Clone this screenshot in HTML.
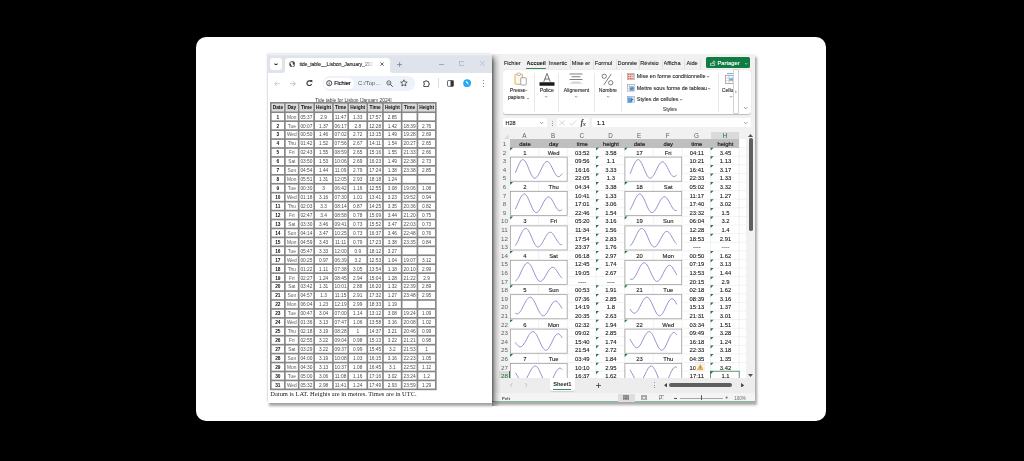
<!DOCTYPE html>
<html><head><meta charset="utf-8"><title>tide</title>
<style>
html,body{margin:0;padding:0;}
body{width:1024px;height:461px;background:#000;overflow:hidden;position:relative;
 font-family:"Liberation Sans",sans-serif;}
.abs{position:absolute;}
.card{position:absolute;left:196px;top:37px;width:630px;height:384px;background:#fff;border-radius:10px;}


.br{position:absolute;left:268px;top:54px;width:223.6px;height:348.7px;background:#fff;
 box-shadow:-1px -.6px 1.6px rgba(0,0,0,.13), .6px 3.2px 2.4px rgba(0,0,0,.36);}
.blur{filter:blur(0.35px);}


.xl{position:absolute;left:491.6px;top:54px;width:263.2px;height:348.2px;background:#f1f1f1;
 box-shadow:2.4px 3px 2.4px rgba(0,0,0,.34);overflow:hidden;}


/* ---------- browser ---------- */
.tabstrip{position:absolute;left:0;top:0;width:100%;height:18.5px;background:#dfe3eb;}
.tabstrip:before{content:"";position:absolute;left:0;top:0;width:100%;height:2px;background:linear-gradient(#f2f4f7,#dfe3eb);}
.tsbtn{position:absolute;left:2.2px;top:3.9px;width:12px;height:12px;background:#fff;border-radius:3px;}
.tab{position:absolute;left:17.4px;top:3.9px;width:104.5px;height:14.7px;background:#fff;border-radius:3.5px 3.5px 0 0;}
.tabtitle{position:absolute;left:14px;top:3.2px;font-size:5.3px;color:#222;-webkit-text-stroke:.1px #222;white-space:nowrap;width:74.5px;overflow:hidden;
 -webkit-mask-image:linear-gradient(90deg,#000 82%,transparent);letter-spacing:-0.137px}
.toolbar{position:absolute;left:0;top:18.5px;width:100%;height:21px;background:#fff;border-bottom:1px solid #e6e6e6;}
.omni{position:absolute;left:54.5px;top:3.6px;width:92px;height:14.8px;border-radius:7.4px;background:#edf1f9;}
.chip{position:absolute;left:1.3px;top:1.6px;width:30px;height:11.6px;border-radius:5.8px;background:#fff;}
.content{position:absolute;left:0;top:39.5px;width:100%;bottom:0;background:#fff;overflow:hidden;}
.cap{position:absolute;left:2.1px;width:166.7px;top:4.2px;text-align:center;font-size:4.8px;color:#333;white-space:nowrap;}
.foot{position:absolute;left:2.3px;top:296.2px;font-family:"Liberation Serif",serif;font-size:6.48px;color:#1a1a1a;white-space:nowrap;}
.tc{position:absolute;text-align:center;font-size:4.8px;color:#4a4a4a;white-space:nowrap;}
.tc.th{font-weight:bold;color:#111;}
.tc.td0{font-weight:bold;color:#111;}
.tc.td1{color:#5c5754;}
table.tt{position:absolute;left:1.9px;top:48.2px;border-collapse:collapse;table-layout:fixed;font-size:5.3px;color:#333;}
table.tt td,table.tt th{border:1.25px solid #7b7b7b;padding:0;height:7.7px;line-height:7.7px;text-align:center;overflow:hidden;white-space:nowrap;
 box-shadow:inset 0 0 0 0.45px #fff, inset 0 0 0 0.9px #bdbdbd;}
table.tt th{background:#d3d3d3;color:#111;font-weight:bold;box-shadow:inset 0 0 0 0.45px #f4f4f4, inset 0 0 0 0.9px #b0b0b0;}
table.tt td.d{font-weight:bold;color:#111;}


/* ---------- excel ---------- */
.xtabs{position:absolute;left:0;top:0;width:100%;height:16px;font-size:5.6px;color:#222;-webkit-text-stroke:.1px #222;}
.xtabs span{position:absolute;top:5.6px;white-space:nowrap;overflow:hidden;height:8px;}
.xsep{position:absolute;top:4.5px;width:0.5px;height:10px;background:#e0e0e0;}
.share{position:absolute;left:214.8px;top:3.4px;width:43.6px;height:10.6px;background:#117c41;border-radius:1.6px;color:#fff;font-size:6px;}
.ribbon{position:absolute;left:11.2px;top:15.8px;width:248.4px;height:44.2px;background:#fff;border-radius:3px;box-shadow:0 0.4px 1px rgba(0,0,0,.22);}
.rsep{position:absolute;top:3px;width:0.5px;height:39px;background:#e9e9e9;}
.rlab{position:absolute;font-size:5.1px;color:#2a2a2a;-webkit-text-stroke:.1px #2a2a2a;text-align:center;white-space:nowrap;line-height:7px;}
.chev{position:absolute;width:2.2px;height:2.2px;border-right:0.6px solid #555;border-bottom:0.6px solid #555;transform:rotate(45deg);}
.fbox{position:absolute;top:64.4px;height:9px;background:#fff;border-radius:1.6px;}
.colhdr{position:absolute;top:77.8px;height:7.5px;font-size:6.3px;color:#5e5e5e;text-align:center;line-height:8px;}
.rowhdr{position:absolute;left:7.4px;width:11px;font-size:6.2px;color:#5e5e5e;text-align:center;}
.grid{position:absolute;left:18.55px;top:85.05px;width:236px;height:239.5px;background:#fff;overflow:hidden;}
.cell{position:absolute;margin-left:.5px;font-size:5.85px;color:#1c1c1c;text-align:center;white-space:nowrap;-webkit-text-stroke:.11px #1c1c1c;}
.gt{position:absolute;width:0;height:0;border-top:3px solid #1f6f3c;border-right:3px solid transparent;}
.chart{position:absolute;background:#fff;border:0.6px solid #9c9c9c;box-sizing:border-box;}
</style></head><body>

<div class="card"></div>
<div class="blur"><div class="xl">
<div class="xtabs">
<span style="left:12.3px;width:20.0px;">Fichier</span>
<span style="left:35.0px;width:20.5px;font-weight:bold;color:#1b1b1b;font-size:5.4px;">Accueil</span>
<span style="left:57.4px;width:20.6px;">Insertic</span>
<span style="left:80.2px;width:20.4px;">Mise er</span>
<span style="left:103.2px;width:20.3px;">Formul</span>
<span style="left:126.0px;width:20.4px;">Donnée</span>
<span style="left:148.7px;width:20.6px;">Révisio</span>
<span style="left:172.0px;width:20.2px;">Afficha</span>
<span style="left:194.9px;width:13.0px;">Aide</span>
<div class="xsep" style="left:56.0px"></div>
<div class="xsep" style="left:78.9px"></div>
<div class="xsep" style="left:101.6px"></div>
<div class="xsep" style="left:124.4px"></div>
<div class="xsep" style="left:147.2px"></div>
<div class="xsep" style="left:170.0px"></div>
<div class="xsep" style="left:192.8px"></div>
<div class="xsep" style="left:208.9px"></div>
<div class="abs" style="left:34.8px;top:13.6px;width:19.2px;height:1.3px;background:#2f8553;border-radius:.6px"></div>
</div>
<div class="share"><svg class="abs" style="left:3.7px;top:2.4px" width="5.6" height="6.2" viewBox="0 0 12 13"><path d="M1 6v6h9V8" fill="none" stroke="#fff" stroke-width="1.3"/><path d="M3.5 8.5C4 5.5 6 4 8 4V1.5L11.5 5 8 8.2V6C6 6 4.5 7 3.5 8.5z" fill="none" stroke="#fff" stroke-width="1.2"/></svg><span class="abs" style="left:11px;top:2.5px;font-size:5.8px;-webkit-text-stroke:.12px #fff">Partager</span><svg class="abs" style="left:38.60px;top:5.25px;overflow:visible" width="2.40" height="1.30"><path d="M0 0L1.20 1.30L2.40 0" fill="none" stroke="#e8f3ec" stroke-width="0.55"/></svg></div>
<div class="ribbon">
<div class="rsep" style="left:31.4px"></div>
<div class="rsep" style="left:55.6px"></div>
<div class="rsep" style="left:91.4px"></div>
<div class="rsep" style="left:118.5px"></div>
<div class="rsep" style="left:215.5px"></div>
<svg class="abs" style="left:11px;top:2.6px" width="14" height="14.5" viewBox="0 0 28 29"><rect x="2" y="4.5" width="15" height="20" rx="1" fill="#fdf6ea" stroke="#e3a94d" stroke-width="1.8"/><rect x="6" y="2" width="7" height="5" rx="1.3" fill="#f4f4f4" stroke="#9a9a9a" stroke-width="1.1"/><rect x="13.5" y="11.5" width="11" height="14.5" rx="1" fill="#fff" stroke="#8c8c8c" stroke-width="1.5"/></svg>
<div class="rlab" style="left:1.8px;width:28px;top:17.5px">Presse-</div>
<div class="rlab" style="left:-0.5px;width:28px;top:24.5px">papiers</div>
<svg class="abs" style="left:24.60px;top:27.75px;overflow:visible" width="2.00" height="1.10"><path d="M0 0L1.00 1.10L2.00 0" fill="none" stroke="#555" stroke-width="0.55"/></svg>
<svg class="abs" style="left:36px;top:2.4px" width="16" height="15" viewBox="0 0 32 30"><path d="M9.5 19.5L16 3l6.5 16.5M11.6 14h8.8" fill="none" stroke="#444" stroke-width="1.5"/><rect x="1" y="20.5" width="30" height="7" fill="#1c1c1c"/></svg>
<div class="rlab" style="left:32px;width:24px;top:17.5px">Police</div>
<svg class="abs" style="left:42.40px;top:26.65px;overflow:visible" width="2.40" height="1.30"><path d="M0 0L1.20 1.30L2.40 0" fill="none" stroke="#555" stroke-width="0.55"/></svg>
<svg class="abs" style="left:66.6px;top:3.6px" width="14" height="11" viewBox="0 0 28 22"><path d="M1 2h26M5 7.5h18M1 13h26" stroke="#555" stroke-width="1.5"/><path d="M5 18.5h18" stroke="#aaa" stroke-width="1.5"/><path d="M1 21h26" stroke="#ccc" stroke-width="1.2"/></svg>
<div class="rlab" style="left:56px;width:35.4px;top:17.5px">Alignement</div>
<svg class="abs" style="left:72.30px;top:26.65px;overflow:visible" width="2.40" height="1.30"><path d="M0 0L1.20 1.30L2.40 0" fill="none" stroke="#555" stroke-width="0.55"/></svg>
<svg class="abs" style="left:98.5px;top:3px" width="13" height="13" viewBox="0 0 26 26"><circle cx="6.5" cy="6.5" r="4.3" fill="none" stroke="#555" stroke-width="1.5"/><circle cx="19.5" cy="19.5" r="4.3" fill="none" stroke="#555" stroke-width="1.5"/><path d="M20.5 2L5.5 24" stroke="#555" stroke-width="1.5"/></svg>
<div class="rlab" style="left:91.6px;width:27px;top:17.5px">Nombre</div>
<svg class="abs" style="left:103.80px;top:26.65px;overflow:visible" width="2.40" height="1.30"><path d="M0 0L1.20 1.30L2.40 0" fill="none" stroke="#555" stroke-width="0.55"/></svg>
<svg class="abs" style="left:124.4px;top:3.2px" width="7.6" height="7.4" viewBox="0 0 15 15"><rect x=".6" y=".6" width="13.8" height="13.8" fill="#fff" stroke="#8a8a8a" stroke-width="1"/><rect x="1.5" y="1.6" width="12" height="3.4" fill="#e0705f"/><rect x="1.5" y="6" width="7" height="3.2" fill="#e0705f"/><rect x="9" y="6" width="4.5" height="3.2" fill="#7fb2e5"/><rect x="1.5" y="10.2" width="12" height="3.2" fill="#e0705f"/><path d="M5 1v13M10 1v13" stroke="#fff" stroke-width=".8"/></svg>
<div class="rlab" style="left:134px;top:3.3px;text-align:left;font-size:5.4px">Mise en forme conditionnelle</div>
<svg class="abs" style="left:204.20px;top:6.35px;overflow:visible" width="2.20" height="1.30"><path d="M0 0L1.10 1.30L2.20 0" fill="none" stroke="#444" stroke-width="0.60"/></svg>
<svg class="abs" style="left:124.4px;top:14.7px" width="7.6" height="7.4" viewBox="0 0 15 15"><rect x=".6" y=".6" width="13.8" height="13.8" fill="#fff" stroke="#8a8a8a" stroke-width="1"/><path d="M1 5h13M1 9.5h13M5 1v13M10 1v13" stroke="#9a9a9a" stroke-width=".9"/><rect x="5.5" y="5.5" width="8.5" height="8.5" fill="#5aa2e6" opacity=".85"/><path d="M5 13l5-6 3 1z" fill="#2c6fb7"/></svg>
<div class="rlab" style="left:134px;top:14.8px;text-align:left;font-size:5.4px">Mettre sous forme de tableau</div>
<svg class="abs" style="left:205.70px;top:17.85px;overflow:visible" width="2.20" height="1.30"><path d="M0 0L1.10 1.30L2.20 0" fill="none" stroke="#444" stroke-width="0.60"/></svg>
<svg class="abs" style="left:124.4px;top:26.3px" width="7.6" height="7.4" viewBox="0 0 15 15"><rect x=".6" y=".6" width="13.8" height="13.8" fill="#dfe9f5" stroke="#8a8a8a" stroke-width="1"/><rect x="1.5" y="3" width="9" height="10.5" fill="#5aa2e6"/><path d="M4 13l6-8 3 1.5z" fill="#2c6fb7"/></svg>
<div class="rlab" style="left:134px;top:26.4px;text-align:left;font-size:5.4px">Styles de cellules</div>
<svg class="abs" style="left:177.20px;top:29.45px;overflow:visible" width="2.20" height="1.30"><path d="M0 0L1.10 1.30L2.20 0" fill="none" stroke="#444" stroke-width="0.60"/></svg>
<div class="rlab" style="left:150px;width:34px;top:36.6px;font-size:5.2px;color:#555">Styles</div>
<svg class="abs" style="left:222.4px;top:3.2px" width="12" height="11.5" viewBox="0 0 24 23"><path d="M4 1.2h12" stroke="#4a90d9" stroke-width="1.6"/><rect x="1" y="5" width="22" height="16" fill="#fff" stroke="#9a8f86" stroke-width="1.4"/><path d="M1 10.3h22M1 15.6h22M8 5v16M16 5v16" stroke="#a8a8a8" stroke-width="1"/><rect x="8.5" y="10.8" width="14" height="4.4" fill="#56b0f2"/></svg>
<div class="rlab" style="left:219px;width:20px;top:17.5px;text-align:left">Cellu</div>
<svg class="abs" style="left:227.40px;top:26.55px;overflow:visible" width="2.40" height="1.30"><path d="M0 0L1.20 1.30L2.40 0" fill="none" stroke="#555" stroke-width="0.55"/></svg>
<div class="abs" style="left:230.2px;top:-0.6px;width:6.1px;height:44.4px;background:#fff;border:0.5px solid #d2d2d2;border-radius:1px;box-sizing:border-box"></div>
<div class="abs" style="left:232.2px;top:18px;font-size:5px;color:#444;line-height:6px">›</div>
<svg class="abs" style="left:240.80px;top:36.90px;overflow:visible" width="3.40" height="1.80"><path d="M0 0L1.70 1.80L3.40 0" fill="none" stroke="#555" stroke-width="0.55"/></svg>
</div>
<div class="fbox" style="left:11.4px;width:44px"><span class="abs" style="left:2.6px;top:1.6px;font-size:5.5px;color:#222;-webkit-text-stroke:.12px #222">H28</span><svg class="abs" style="left:36.80px;top:3.75px;overflow:visible" width="3.20" height="1.70"><path d="M0 0L1.60 1.70L3.20 0" fill="none" stroke="#555" stroke-width="0.55"/></svg></div>
<div class="abs" style="left:60.1px;top:66.6px;width:.9px;height:.9px;background:#666;border-radius:50%"></div>
<div class="abs" style="left:60.1px;top:68.8px;width:.9px;height:.9px;background:#666;border-radius:50%"></div>
<div class="abs" style="left:60.1px;top:71.0px;width:.9px;height:.9px;background:#666;border-radius:50%"></div>
<div class="fbox" style="left:65.4px;width:32px"><svg class="abs" style="left:2.3px;top:1.8px" width="18" height="5.6" viewBox="0 0 18 5.6"><path d="M.3.3l5.400 5M5.700.3l-5.400 5" stroke="#c2c2c2" stroke-width=".65" fill="none"/><path d="M10.400 3l2.300 2.300L17.300.4" stroke="#c2c2c2" stroke-width=".65" fill="none"/></svg><span class="abs" style="left:23.6px;top:-0.2px;font-family:'Liberation Serif',serif;font-style:italic;font-weight:bold;font-size:8.2px;color:#444;letter-spacing:-.5px">f<span style="font-size:6.2px;position:relative;top:.4px">x</span></span></div>
<div class="fbox" style="left:100.4px;width:159px"><span class="abs" style="left:5px;top:1.5px;font-size:5.6px;color:#111;-webkit-text-stroke:.15px #111">1.1</span><svg class="abs" style="left:152.30px;top:3.70px;overflow:visible" width="3.40" height="1.80"><path d="M0 0L1.70 1.80L3.40 0" fill="none" stroke="#555" stroke-width="0.55"/></svg></div>
<svg class="abs" style="left:12.4px;top:79.6px" width="5" height="5" viewBox="0 0 5 5"><path d="M5 0v5H0z" fill="#dddddd"/></svg>
<div class="colhdr" style="left:18.55px;width:28.65px;">A</div>
<div class="colhdr" style="left:47.20px;width:28.65px;">B</div>
<div class="colhdr" style="left:75.85px;width:28.65px;">C</div>
<div class="colhdr" style="left:104.50px;width:28.65px;">D</div>
<div class="colhdr" style="left:133.15px;width:28.65px;">E</div>
<div class="colhdr" style="left:161.80px;width:28.65px;">F</div>
<div class="colhdr" style="left:190.45px;width:28.65px;">G</div>
<div class="colhdr" style="left:219.10px;width:28.65px;background:#dadada;color:#1e6b3c;border-bottom:0.7px solid #2f7d4f;height:6.9px;">H</div>
<div class="rowhdr" style="top:85.05px;height:8.60px;line-height:10.20px;">1</div>
<div class="rowhdr" style="top:93.65px;height:8.60px;line-height:10.20px;">2</div>
<div class="rowhdr" style="top:102.25px;height:8.60px;line-height:10.20px;">3</div>
<div class="rowhdr" style="top:110.85px;height:8.60px;line-height:10.20px;">4</div>
<div class="rowhdr" style="top:119.45px;height:8.60px;line-height:10.20px;">5</div>
<div class="rowhdr" style="top:128.05px;height:8.60px;line-height:10.20px;">6</div>
<div class="rowhdr" style="top:136.65px;height:8.60px;line-height:10.20px;">7</div>
<div class="rowhdr" style="top:145.25px;height:8.60px;line-height:10.20px;">8</div>
<div class="rowhdr" style="top:153.85px;height:8.60px;line-height:10.20px;">9</div>
<div class="rowhdr" style="top:162.45px;height:8.60px;line-height:10.20px;">10</div>
<div class="rowhdr" style="top:171.05px;height:8.60px;line-height:10.20px;">11</div>
<div class="rowhdr" style="top:179.65px;height:8.60px;line-height:10.20px;">12</div>
<div class="rowhdr" style="top:188.25px;height:8.60px;line-height:10.20px;">13</div>
<div class="rowhdr" style="top:196.85px;height:8.60px;line-height:10.20px;">14</div>
<div class="rowhdr" style="top:205.45px;height:8.60px;line-height:10.20px;">15</div>
<div class="rowhdr" style="top:214.05px;height:8.60px;line-height:10.20px;">16</div>
<div class="rowhdr" style="top:222.65px;height:8.60px;line-height:10.20px;">17</div>
<div class="rowhdr" style="top:231.25px;height:8.60px;line-height:10.20px;">18</div>
<div class="rowhdr" style="top:239.85px;height:8.60px;line-height:10.20px;">19</div>
<div class="rowhdr" style="top:248.45px;height:8.60px;line-height:10.20px;">20</div>
<div class="rowhdr" style="top:257.05px;height:8.60px;line-height:10.20px;">21</div>
<div class="rowhdr" style="top:265.65px;height:8.60px;line-height:10.20px;">22</div>
<div class="rowhdr" style="top:274.25px;height:8.60px;line-height:10.20px;">23</div>
<div class="rowhdr" style="top:282.85px;height:8.60px;line-height:10.20px;">24</div>
<div class="rowhdr" style="top:291.45px;height:8.60px;line-height:10.20px;">25</div>
<div class="rowhdr" style="top:300.05px;height:8.60px;line-height:10.20px;">26</div>
<div class="rowhdr" style="top:308.65px;height:8.60px;line-height:10.20px;">27</div>
<div class="rowhdr" style="top:317.25px;height:8.60px;line-height:10.20px;color:#1e6b3c;background:#dcdcdc;">28</div>
<div class="abs" style="left:17.85px;top:317.25px;width:.7px;height:8.60px;background:#2f7d4f"></div>
<div class="grid">
<svg class="abs" style="left:0;top:0" width="236.2" height="239.3">
<path d="M0 8.60H236.2" stroke="#e4e4e4" stroke-width=".5"/>
<path d="M0 17.20H236.2" stroke="#e4e4e4" stroke-width=".5"/>
<path d="M0 25.80H236.2" stroke="#e4e4e4" stroke-width=".5"/>
<path d="M0 34.40H236.2" stroke="#e4e4e4" stroke-width=".5"/>
<path d="M0 43.00H236.2" stroke="#e4e4e4" stroke-width=".5"/>
<path d="M0 51.60H236.2" stroke="#e4e4e4" stroke-width=".5"/>
<path d="M0 60.20H236.2" stroke="#e4e4e4" stroke-width=".5"/>
<path d="M0 68.80H236.2" stroke="#e4e4e4" stroke-width=".5"/>
<path d="M0 77.40H236.2" stroke="#e4e4e4" stroke-width=".5"/>
<path d="M0 86.00H236.2" stroke="#e4e4e4" stroke-width=".5"/>
<path d="M0 94.60H236.2" stroke="#e4e4e4" stroke-width=".5"/>
<path d="M0 103.20H236.2" stroke="#e4e4e4" stroke-width=".5"/>
<path d="M0 111.80H236.2" stroke="#e4e4e4" stroke-width=".5"/>
<path d="M0 120.40H236.2" stroke="#e4e4e4" stroke-width=".5"/>
<path d="M0 129.00H236.2" stroke="#e4e4e4" stroke-width=".5"/>
<path d="M0 137.60H236.2" stroke="#e4e4e4" stroke-width=".5"/>
<path d="M0 146.20H236.2" stroke="#e4e4e4" stroke-width=".5"/>
<path d="M0 154.80H236.2" stroke="#e4e4e4" stroke-width=".5"/>
<path d="M0 163.40H236.2" stroke="#e4e4e4" stroke-width=".5"/>
<path d="M0 172.00H236.2" stroke="#e4e4e4" stroke-width=".5"/>
<path d="M0 180.60H236.2" stroke="#e4e4e4" stroke-width=".5"/>
<path d="M0 189.20H236.2" stroke="#e4e4e4" stroke-width=".5"/>
<path d="M0 197.80H236.2" stroke="#e4e4e4" stroke-width=".5"/>
<path d="M0 206.40H236.2" stroke="#e4e4e4" stroke-width=".5"/>
<path d="M0 215.00H236.2" stroke="#e4e4e4" stroke-width=".5"/>
<path d="M0 223.60H236.2" stroke="#e4e4e4" stroke-width=".5"/>
<path d="M0 232.20H236.2" stroke="#e4e4e4" stroke-width=".5"/>
<path d="M0 240.80H236.2" stroke="#e4e4e4" stroke-width=".5"/>
<path d="M28.65 0V239.3" stroke="#e4e4e4" stroke-width=".5"/>
<path d="M57.30 0V239.3" stroke="#e4e4e4" stroke-width=".5"/>
<path d="M85.95 0V239.3" stroke="#e4e4e4" stroke-width=".5"/>
<path d="M114.60 0V239.3" stroke="#e4e4e4" stroke-width=".5"/>
<path d="M143.25 0V239.3" stroke="#e4e4e4" stroke-width=".5"/>
<path d="M171.90 0V239.3" stroke="#e4e4e4" stroke-width=".5"/>
<path d="M200.55 0V239.3" stroke="#e4e4e4" stroke-width=".5"/>
<path d="M229.20 0V239.3" stroke="#e4e4e4" stroke-width=".5"/>
</svg>
<div class="abs" style="left:0;top:0;width:229.20px;height:8.60px;background:#bfbfbf"></div>
<div class="cell" style="left:0.00px;top:0;width:28.65px;line-height:10.40px;color:#222;-webkit-text-stroke:.2px #2a2a2a">date</div>
<div class="cell" style="left:28.65px;top:0;width:28.65px;line-height:10.40px;color:#222;-webkit-text-stroke:.2px #2a2a2a">day</div>
<div class="cell" style="left:57.30px;top:0;width:28.65px;line-height:10.40px;color:#222;-webkit-text-stroke:.2px #2a2a2a">time</div>
<div class="cell" style="left:85.95px;top:0;width:28.65px;line-height:10.40px;color:#222;-webkit-text-stroke:.2px #2a2a2a">height</div>
<div class="cell" style="left:114.60px;top:0;width:28.65px;line-height:10.40px;color:#222;-webkit-text-stroke:.2px #2a2a2a">date</div>
<div class="cell" style="left:143.25px;top:0;width:28.65px;line-height:10.40px;color:#222;-webkit-text-stroke:.2px #2a2a2a">day</div>
<div class="cell" style="left:171.90px;top:0;width:28.65px;line-height:10.40px;color:#222;-webkit-text-stroke:.2px #2a2a2a">time</div>
<div class="cell" style="left:200.55px;top:0;width:28.65px;line-height:10.40px;color:#222;-webkit-text-stroke:.2px #2a2a2a">height</div>
<div class="cell" style="left:0.00px;top:8.60px;width:28.65px;line-height:10.40px">1</div>
<div class="cell" style="left:28.65px;top:8.60px;width:28.65px;line-height:10.40px">Wed</div>
<div class="cell" style="left:57.30px;top:8.60px;width:28.65px;line-height:10.40px">03:52</div>
<div class="cell" style="left:85.95px;top:8.60px;width:28.65px;line-height:10.40px">3.58</div>
<div class="cell" style="left:57.30px;top:17.20px;width:28.65px;line-height:10.40px">09:56</div>
<div class="cell" style="left:85.95px;top:17.20px;width:28.65px;line-height:10.40px">1.1</div>
<div class="cell" style="left:57.30px;top:25.80px;width:28.65px;line-height:10.40px">16:16</div>
<div class="cell" style="left:85.95px;top:25.80px;width:28.65px;line-height:10.40px">3.33</div>
<div class="cell" style="left:57.30px;top:34.40px;width:28.65px;line-height:10.40px">22:05</div>
<div class="cell" style="left:85.95px;top:34.40px;width:28.65px;line-height:10.40px">1.3</div>
<div class="cell" style="left:0.00px;top:43.00px;width:28.65px;line-height:10.40px">2</div>
<div class="cell" style="left:28.65px;top:43.00px;width:28.65px;line-height:10.40px">Thu</div>
<div class="cell" style="left:57.30px;top:43.00px;width:28.65px;line-height:10.40px">04:34</div>
<div class="cell" style="left:85.95px;top:43.00px;width:28.65px;line-height:10.40px">3.38</div>
<div class="cell" style="left:57.30px;top:51.60px;width:28.65px;line-height:10.40px">10:41</div>
<div class="cell" style="left:85.95px;top:51.60px;width:28.65px;line-height:10.40px">1.33</div>
<div class="cell" style="left:57.30px;top:60.20px;width:28.65px;line-height:10.40px">17:01</div>
<div class="cell" style="left:85.95px;top:60.20px;width:28.65px;line-height:10.40px">3.06</div>
<div class="cell" style="left:57.30px;top:68.80px;width:28.65px;line-height:10.40px">22:46</div>
<div class="cell" style="left:85.95px;top:68.80px;width:28.65px;line-height:10.40px">1.54</div>
<div class="cell" style="left:0.00px;top:77.40px;width:28.65px;line-height:10.40px">3</div>
<div class="cell" style="left:28.65px;top:77.40px;width:28.65px;line-height:10.40px">Fri</div>
<div class="cell" style="left:57.30px;top:77.40px;width:28.65px;line-height:10.40px">05:20</div>
<div class="cell" style="left:85.95px;top:77.40px;width:28.65px;line-height:10.40px">3.16</div>
<div class="cell" style="left:57.30px;top:86.00px;width:28.65px;line-height:10.40px">11:34</div>
<div class="cell" style="left:85.95px;top:86.00px;width:28.65px;line-height:10.40px">1.56</div>
<div class="cell" style="left:57.30px;top:94.60px;width:28.65px;line-height:10.40px">17:54</div>
<div class="cell" style="left:85.95px;top:94.60px;width:28.65px;line-height:10.40px">2.83</div>
<div class="cell" style="left:57.30px;top:103.20px;width:28.65px;line-height:10.40px">23:37</div>
<div class="cell" style="left:85.95px;top:103.20px;width:28.65px;line-height:10.40px">1.76</div>
<div class="cell" style="left:0.00px;top:111.80px;width:28.65px;line-height:10.40px">4</div>
<div class="cell" style="left:28.65px;top:111.80px;width:28.65px;line-height:10.40px">Sat</div>
<div class="cell" style="left:57.30px;top:111.80px;width:28.65px;line-height:10.40px">06:18</div>
<div class="cell" style="left:85.95px;top:111.80px;width:28.65px;line-height:10.40px">2.97</div>
<div class="cell" style="left:57.30px;top:120.40px;width:28.65px;line-height:10.40px">12:45</div>
<div class="cell" style="left:85.95px;top:120.40px;width:28.65px;line-height:10.40px">1.74</div>
<div class="cell" style="left:57.30px;top:129.00px;width:28.65px;line-height:10.40px">19:05</div>
<div class="cell" style="left:85.95px;top:129.00px;width:28.65px;line-height:10.40px">2.67</div>
<div class="cell" style="left:57.30px;top:137.60px;width:28.65px;line-height:10.40px">----</div>
<div class="cell" style="left:85.95px;top:137.60px;width:28.65px;line-height:10.40px">----</div>
<div class="cell" style="left:0.00px;top:146.20px;width:28.65px;line-height:10.40px">5</div>
<div class="cell" style="left:28.65px;top:146.20px;width:28.65px;line-height:10.40px">Sun</div>
<div class="cell" style="left:57.30px;top:146.20px;width:28.65px;line-height:10.40px">00:53</div>
<div class="cell" style="left:85.95px;top:146.20px;width:28.65px;line-height:10.40px">1.91</div>
<div class="cell" style="left:57.30px;top:154.80px;width:28.65px;line-height:10.40px">07:36</div>
<div class="cell" style="left:85.95px;top:154.80px;width:28.65px;line-height:10.40px">2.85</div>
<div class="cell" style="left:57.30px;top:163.40px;width:28.65px;line-height:10.40px">14:19</div>
<div class="cell" style="left:85.95px;top:163.40px;width:28.65px;line-height:10.40px">1.8</div>
<div class="cell" style="left:57.30px;top:172.00px;width:28.65px;line-height:10.40px">20:35</div>
<div class="cell" style="left:85.95px;top:172.00px;width:28.65px;line-height:10.40px">2.63</div>
<div class="cell" style="left:0.00px;top:180.60px;width:28.65px;line-height:10.40px">6</div>
<div class="cell" style="left:28.65px;top:180.60px;width:28.65px;line-height:10.40px">Mon</div>
<div class="cell" style="left:57.30px;top:180.60px;width:28.65px;line-height:10.40px">02:32</div>
<div class="cell" style="left:85.95px;top:180.60px;width:28.65px;line-height:10.40px">1.94</div>
<div class="cell" style="left:57.30px;top:189.20px;width:28.65px;line-height:10.40px">09:02</div>
<div class="cell" style="left:85.95px;top:189.20px;width:28.65px;line-height:10.40px">2.85</div>
<div class="cell" style="left:57.30px;top:197.80px;width:28.65px;line-height:10.40px">15:40</div>
<div class="cell" style="left:85.95px;top:197.80px;width:28.65px;line-height:10.40px">1.74</div>
<div class="cell" style="left:57.30px;top:206.40px;width:28.65px;line-height:10.40px">21:54</div>
<div class="cell" style="left:85.95px;top:206.40px;width:28.65px;line-height:10.40px">2.72</div>
<div class="cell" style="left:0.00px;top:215.00px;width:28.65px;line-height:10.40px">7</div>
<div class="cell" style="left:28.65px;top:215.00px;width:28.65px;line-height:10.40px">Tue</div>
<div class="cell" style="left:57.30px;top:215.00px;width:28.65px;line-height:10.40px">03:49</div>
<div class="cell" style="left:85.95px;top:215.00px;width:28.65px;line-height:10.40px">1.84</div>
<div class="cell" style="left:57.30px;top:223.60px;width:28.65px;line-height:10.40px">10:10</div>
<div class="cell" style="left:85.95px;top:223.60px;width:28.65px;line-height:10.40px">2.95</div>
<div class="cell" style="left:57.30px;top:232.20px;width:28.65px;line-height:10.40px">16:37</div>
<div class="cell" style="left:85.95px;top:232.20px;width:28.65px;line-height:10.40px">1.62</div>
<div class="cell" style="left:114.60px;top:8.60px;width:28.65px;line-height:10.40px">17</div>
<div class="cell" style="left:143.25px;top:8.60px;width:28.65px;line-height:10.40px">Fri</div>
<div class="cell" style="left:171.90px;top:8.60px;width:28.65px;line-height:10.40px">04:11</div>
<div class="cell" style="left:200.55px;top:8.60px;width:28.65px;line-height:10.40px">3.45</div>
<div class="cell" style="left:171.90px;top:17.20px;width:28.65px;line-height:10.40px">10:21</div>
<div class="cell" style="left:200.55px;top:17.20px;width:28.65px;line-height:10.40px">1.13</div>
<div class="cell" style="left:171.90px;top:25.80px;width:28.65px;line-height:10.40px">16:41</div>
<div class="cell" style="left:200.55px;top:25.80px;width:28.65px;line-height:10.40px">3.17</div>
<div class="cell" style="left:171.90px;top:34.40px;width:28.65px;line-height:10.40px">22:33</div>
<div class="cell" style="left:200.55px;top:34.40px;width:28.65px;line-height:10.40px">1.33</div>
<div class="cell" style="left:114.60px;top:43.00px;width:28.65px;line-height:10.40px">18</div>
<div class="cell" style="left:143.25px;top:43.00px;width:28.65px;line-height:10.40px">Sat</div>
<div class="cell" style="left:171.90px;top:43.00px;width:28.65px;line-height:10.40px">05:02</div>
<div class="cell" style="left:200.55px;top:43.00px;width:28.65px;line-height:10.40px">3.32</div>
<div class="cell" style="left:171.90px;top:51.60px;width:28.65px;line-height:10.40px">11:17</div>
<div class="cell" style="left:200.55px;top:51.60px;width:28.65px;line-height:10.40px">1.27</div>
<div class="cell" style="left:171.90px;top:60.20px;width:28.65px;line-height:10.40px">17:40</div>
<div class="cell" style="left:200.55px;top:60.20px;width:28.65px;line-height:10.40px">3.02</div>
<div class="cell" style="left:171.90px;top:68.80px;width:28.65px;line-height:10.40px">23:32</div>
<div class="cell" style="left:200.55px;top:68.80px;width:28.65px;line-height:10.40px">1.5</div>
<div class="cell" style="left:114.60px;top:77.40px;width:28.65px;line-height:10.40px">19</div>
<div class="cell" style="left:143.25px;top:77.40px;width:28.65px;line-height:10.40px">Sun</div>
<div class="cell" style="left:171.90px;top:77.40px;width:28.65px;line-height:10.40px">06:04</div>
<div class="cell" style="left:200.55px;top:77.40px;width:28.65px;line-height:10.40px">3.2</div>
<div class="cell" style="left:171.90px;top:86.00px;width:28.65px;line-height:10.40px">12:28</div>
<div class="cell" style="left:200.55px;top:86.00px;width:28.65px;line-height:10.40px">1.4</div>
<div class="cell" style="left:171.90px;top:94.60px;width:28.65px;line-height:10.40px">18:53</div>
<div class="cell" style="left:200.55px;top:94.60px;width:28.65px;line-height:10.40px">2.91</div>
<div class="cell" style="left:171.90px;top:103.20px;width:28.65px;line-height:10.40px">----</div>
<div class="cell" style="left:200.55px;top:103.20px;width:28.65px;line-height:10.40px">----</div>
<div class="cell" style="left:114.60px;top:111.80px;width:28.65px;line-height:10.40px">20</div>
<div class="cell" style="left:143.25px;top:111.80px;width:28.65px;line-height:10.40px">Mon</div>
<div class="cell" style="left:171.90px;top:111.80px;width:28.65px;line-height:10.40px">00:50</div>
<div class="cell" style="left:200.55px;top:111.80px;width:28.65px;line-height:10.40px">1.62</div>
<div class="cell" style="left:171.90px;top:120.40px;width:28.65px;line-height:10.40px">07:19</div>
<div class="cell" style="left:200.55px;top:120.40px;width:28.65px;line-height:10.40px">3.13</div>
<div class="cell" style="left:171.90px;top:129.00px;width:28.65px;line-height:10.40px">13:53</div>
<div class="cell" style="left:200.55px;top:129.00px;width:28.65px;line-height:10.40px">1.44</div>
<div class="cell" style="left:171.90px;top:137.60px;width:28.65px;line-height:10.40px">20:15</div>
<div class="cell" style="left:200.55px;top:137.60px;width:28.65px;line-height:10.40px">2.9</div>
<div class="cell" style="left:114.60px;top:146.20px;width:28.65px;line-height:10.40px">21</div>
<div class="cell" style="left:143.25px;top:146.20px;width:28.65px;line-height:10.40px">Tue</div>
<div class="cell" style="left:171.90px;top:146.20px;width:28.65px;line-height:10.40px">02:18</div>
<div class="cell" style="left:200.55px;top:146.20px;width:28.65px;line-height:10.40px">1.62</div>
<div class="cell" style="left:171.90px;top:154.80px;width:28.65px;line-height:10.40px">08:39</div>
<div class="cell" style="left:200.55px;top:154.80px;width:28.65px;line-height:10.40px">3.16</div>
<div class="cell" style="left:171.90px;top:163.40px;width:28.65px;line-height:10.40px">15:13</div>
<div class="cell" style="left:200.55px;top:163.40px;width:28.65px;line-height:10.40px">1.37</div>
<div class="cell" style="left:171.90px;top:172.00px;width:28.65px;line-height:10.40px">21:31</div>
<div class="cell" style="left:200.55px;top:172.00px;width:28.65px;line-height:10.40px">3.01</div>
<div class="cell" style="left:114.60px;top:180.60px;width:28.65px;line-height:10.40px">22</div>
<div class="cell" style="left:143.25px;top:180.60px;width:28.65px;line-height:10.40px">Wed</div>
<div class="cell" style="left:171.90px;top:180.60px;width:28.65px;line-height:10.40px">03:34</div>
<div class="cell" style="left:200.55px;top:180.60px;width:28.65px;line-height:10.40px">1.51</div>
<div class="cell" style="left:171.90px;top:189.20px;width:28.65px;line-height:10.40px">09:49</div>
<div class="cell" style="left:200.55px;top:189.20px;width:28.65px;line-height:10.40px">3.28</div>
<div class="cell" style="left:171.90px;top:197.80px;width:28.65px;line-height:10.40px">16:18</div>
<div class="cell" style="left:200.55px;top:197.80px;width:28.65px;line-height:10.40px">1.24</div>
<div class="cell" style="left:171.90px;top:206.40px;width:28.65px;line-height:10.40px">22:33</div>
<div class="cell" style="left:200.55px;top:206.40px;width:28.65px;line-height:10.40px">3.18</div>
<div class="cell" style="left:114.60px;top:215.00px;width:28.65px;line-height:10.40px">23</div>
<div class="cell" style="left:143.25px;top:215.00px;width:28.65px;line-height:10.40px">Thu</div>
<div class="cell" style="left:171.90px;top:215.00px;width:28.65px;line-height:10.40px">04:35</div>
<div class="cell" style="left:200.55px;top:215.00px;width:28.65px;line-height:10.40px">1.35</div>
<div class="cell" style="left:171.90px;top:223.60px;width:28.65px;line-height:10.40px">10:55</div>
<div class="cell" style="left:200.55px;top:223.60px;width:28.65px;line-height:10.40px">3.42</div>
<div class="cell" style="left:171.90px;top:232.20px;width:28.65px;line-height:10.40px">17:11</div>
<div class="cell" style="left:200.55px;top:232.20px;width:28.65px;line-height:10.40px">1.1</div>
<svg class="abs" style="left:0;top:0" width="236" height="239.5"><path d="M0.10 8.70h2.90l-2.90 2.90z" fill="#1f6f3c"/><rect x="0.35" y="18.10" width="56.80" height="24.10" fill="#fff" stroke="#8e8e8e" stroke-width=".65"/><path transform="translate(0.35 18.10)" d="M5.00 15.69L5.78 13.87L6.56 11.96L7.34 10.04L8.12 8.20L8.90 6.52L9.68 5.06L10.46 3.88L11.24 3.05L12.02 2.59L12.80 2.52L13.58 2.85L14.36 3.57L15.14 4.63L15.92 6.00L16.70 7.62L17.48 9.42L18.26 11.32L19.04 13.24L19.82 15.10L20.60 16.82L21.38 18.32L22.16 19.54L22.94 20.44L23.72 20.96L24.50 21.10L25.28 20.88L26.06 20.34L26.84 19.50L27.62 18.40L28.40 17.08L29.18 15.58L29.96 13.98L30.74 12.32L31.52 10.68L32.30 9.13L33.08 7.71L33.86 6.49L34.64 5.52L35.42 4.83L36.20 4.45L36.98 4.39L37.76 4.69L38.54 5.32L39.32 6.27L40.10 7.47L40.88 8.89L41.66 10.46L42.44 12.09L43.22 13.72L44.00 15.27L44.78 16.66L45.56 17.84L46.34 18.75L47.12 19.34L47.90 19.59L48.68 19.51L49.46 19.13L50.24 18.49L51.02 17.59L51.80 16.47" fill="none" stroke="#7676c0" stroke-width=".8"/><path d="M86.05 8.70h2.90l-2.90 2.90z" fill="#1f6f3c"/><path d="M86.05 17.30h2.90l-2.90 2.90z" fill="#1f6f3c"/><path d="M86.05 25.90h2.90l-2.90 2.90z" fill="#1f6f3c"/><path d="M86.05 34.50h2.90l-2.90 2.90z" fill="#1f6f3c"/><path d="M0.10 43.10h2.90l-2.90 2.90z" fill="#1f6f3c"/><rect x="0.35" y="52.50" width="56.80" height="24.10" fill="#fff" stroke="#8e8e8e" stroke-width=".65"/><path transform="translate(0.35 52.50)" d="M5.00 17.59L5.78 16.03L6.56 14.31L7.34 12.51L8.12 10.68L8.90 8.90L9.68 7.24L10.46 5.75L11.24 4.49L12.02 3.52L12.80 2.85L13.58 2.53L14.36 2.57L15.14 2.99L15.92 3.78L16.70 4.91L17.48 6.33L18.26 7.98L19.04 9.79L19.82 11.68L20.60 13.58L21.38 15.40L22.16 17.08L22.94 18.53L23.72 19.70L24.50 20.53L25.28 21.00L26.06 21.09L26.84 20.84L27.62 20.30L28.40 19.48L29.18 18.42L29.96 17.16L30.74 15.74L31.52 14.22L32.30 12.67L33.08 11.14L33.86 9.69L34.64 8.38L35.42 7.26L36.20 6.38L36.98 5.77L37.76 5.45L38.54 5.44L39.32 5.75L40.10 6.37L40.88 7.28L41.66 8.43L42.44 9.75L43.22 11.20L44.00 12.71L44.78 14.19L45.56 15.58L46.34 16.82L47.12 17.84L47.90 18.60L48.68 19.06L49.46 19.19L50.24 19.04L51.02 18.62L51.80 17.95" fill="none" stroke="#7676c0" stroke-width=".8"/><path d="M86.05 43.10h2.90l-2.90 2.90z" fill="#1f6f3c"/><path d="M86.05 51.70h2.90l-2.90 2.90z" fill="#1f6f3c"/><path d="M86.05 60.30h2.90l-2.90 2.90z" fill="#1f6f3c"/><path d="M86.05 68.90h2.90l-2.90 2.90z" fill="#1f6f3c"/><path d="M0.10 77.50h2.90l-2.90 2.90z" fill="#1f6f3c"/><rect x="0.35" y="86.90" width="56.80" height="24.10" fill="#fff" stroke="#8e8e8e" stroke-width=".65"/><path transform="translate(0.35 86.90)" d="M5.00 19.74L5.78 18.60L6.56 17.22L7.34 15.64L8.12 13.93L8.90 12.14L9.68 10.35L10.46 8.61L11.24 6.99L12.02 5.56L12.80 4.35L13.58 3.42L14.36 2.80L15.14 2.52L15.92 2.58L16.70 3.02L17.48 3.81L18.26 4.93L19.04 6.32L19.82 7.94L20.60 9.71L21.38 11.57L22.16 13.43L22.94 15.23L23.72 16.89L24.50 18.35L25.28 19.54L26.06 20.41L26.84 20.94L27.62 21.10L28.40 20.93L29.18 20.48L29.96 19.76L30.74 18.81L31.52 17.65L32.30 16.34L33.08 14.93L33.86 13.47L34.64 12.02L35.42 10.64L36.20 9.38L36.98 8.29L37.76 7.41L38.54 6.78L39.32 6.42L40.10 6.35L40.88 6.57L41.66 7.08L42.44 7.86L43.22 8.86L44.00 10.04L44.78 11.34L45.56 12.70L46.34 14.05L47.12 15.33L47.90 16.48L48.68 17.44L49.46 18.16L50.24 18.61L51.02 18.77L51.80 18.66" fill="none" stroke="#7676c0" stroke-width=".8"/><path d="M86.05 77.50h2.90l-2.90 2.90z" fill="#1f6f3c"/><path d="M86.05 86.10h2.90l-2.90 2.90z" fill="#1f6f3c"/><path d="M86.05 94.70h2.90l-2.90 2.90z" fill="#1f6f3c"/><path d="M86.05 103.30h2.90l-2.90 2.90z" fill="#1f6f3c"/><path d="M0.10 111.90h2.90l-2.90 2.90z" fill="#1f6f3c"/><rect x="0.35" y="121.30" width="56.80" height="24.10" fill="#fff" stroke="#8e8e8e" stroke-width=".65"/><path transform="translate(0.35 121.30)" d="M5.00 20.65L5.78 20.18L6.56 19.42L7.34 18.38L8.12 17.10L8.90 15.63L9.68 14.02L10.46 12.33L11.24 10.61L12.02 8.93L12.80 7.35L13.58 5.91L14.36 4.68L15.14 3.70L15.92 2.99L16.70 2.59L17.48 2.51L18.26 2.77L19.04 3.38L19.82 4.30L20.60 5.51L21.38 6.96L22.16 8.58L22.94 10.33L23.72 12.14L24.50 13.93L25.28 15.64L26.06 17.21L26.84 18.57L27.62 19.68L28.40 20.49L29.18 20.97L29.96 21.10L30.74 20.93L31.52 20.48L32.30 19.79L33.08 18.87L33.86 17.77L34.64 16.52L35.42 15.17L36.20 13.78L36.98 12.40L37.76 11.08L38.54 9.89L39.32 8.86L40.10 8.03L40.88 7.44L41.66 7.11L42.44 7.05L43.22 7.26L44.00 7.73L44.78 8.44L45.56 9.35L46.34 10.42L47.12 11.60L47.90 12.83L48.68 14.07L49.46 15.24L50.24 16.30L51.02 17.20L51.80 17.88" fill="none" stroke="#7676c0" stroke-width=".8"/><path d="M86.05 111.90h2.90l-2.90 2.90z" fill="#1f6f3c"/><path d="M86.05 120.50h2.90l-2.90 2.90z" fill="#1f6f3c"/><path d="M86.05 129.10h2.90l-2.90 2.90z" fill="#1f6f3c"/><path d="M0.10 146.30h2.90l-2.90 2.90z" fill="#1f6f3c"/><rect x="0.35" y="155.70" width="56.80" height="24.10" fill="#fff" stroke="#8e8e8e" stroke-width=".65"/><path transform="translate(0.35 155.70)" d="M5.00 18.40L5.78 18.92L6.56 19.14L7.34 19.06L8.12 18.69L8.90 18.04L9.68 17.14L10.46 16.02L11.24 14.72L12.02 13.29L12.80 11.76L13.58 10.21L14.36 8.68L15.14 7.22L15.92 5.88L16.70 4.72L17.48 3.78L18.26 3.08L19.04 2.65L19.82 2.50L20.60 2.66L21.38 3.14L22.16 3.93L22.94 4.98L23.72 6.28L24.50 7.77L25.28 9.40L26.06 11.11L26.84 12.85L27.62 14.55L28.40 16.15L29.18 17.61L29.96 18.86L30.74 19.86L31.52 20.58L32.30 21.00L33.08 21.09L33.86 20.89L34.64 20.39L35.42 19.63L36.20 18.63L36.98 17.44L37.76 16.10L38.54 14.67L39.32 13.20L40.10 11.75L40.88 10.38L41.66 9.14L42.44 8.10L43.22 7.27L44.00 6.71L44.78 6.43L45.56 6.44L46.34 6.72L47.12 7.26L47.90 8.03L48.68 9.00L49.46 10.13L50.24 11.36L51.02 12.64L51.80 13.92" fill="none" stroke="#7676c0" stroke-width=".8"/><path d="M86.05 146.30h2.90l-2.90 2.90z" fill="#1f6f3c"/><path d="M86.05 154.90h2.90l-2.90 2.90z" fill="#1f6f3c"/><path d="M86.05 163.50h2.90l-2.90 2.90z" fill="#1f6f3c"/><path d="M86.05 172.10h2.90l-2.90 2.90z" fill="#1f6f3c"/><path d="M0.10 180.70h2.90l-2.90 2.90z" fill="#1f6f3c"/><rect x="0.35" y="190.10" width="56.80" height="24.10" fill="#fff" stroke="#8e8e8e" stroke-width=".65"/><path transform="translate(0.35 190.10)" d="M5.00 13.30L5.78 14.45L6.56 15.49L7.34 16.37L8.12 17.06L8.90 17.52L9.68 17.73L10.46 17.69L11.24 17.36L12.02 16.76L12.80 15.91L13.58 14.85L14.36 13.61L15.14 12.25L15.92 10.80L16.70 9.33L17.48 7.89L18.26 6.53L19.04 5.30L19.82 4.26L20.60 3.43L21.38 2.85L22.16 2.55L22.94 2.53L23.72 2.83L24.50 3.46L25.28 4.38L26.06 5.57L26.84 6.98L27.62 8.57L28.40 10.27L29.18 12.02L29.96 13.77L30.74 15.44L31.52 16.99L32.30 18.35L33.08 19.48L33.86 20.33L34.64 20.87L35.42 21.10L36.20 20.98L36.98 20.55L37.76 19.80L38.54 18.77L39.32 17.50L40.10 16.05L40.88 14.47L41.66 12.82L42.44 11.18L43.22 9.60L44.00 8.16L44.78 6.92L45.56 5.91L46.34 5.18L47.12 4.77L47.90 4.69L48.68 4.94L49.46 5.50L50.24 6.37L51.02 7.48L51.80 8.81" fill="none" stroke="#7676c0" stroke-width=".8"/><path d="M86.05 180.70h2.90l-2.90 2.90z" fill="#1f6f3c"/><path d="M86.05 189.30h2.90l-2.90 2.90z" fill="#1f6f3c"/><path d="M86.05 197.90h2.90l-2.90 2.90z" fill="#1f6f3c"/><path d="M86.05 206.50h2.90l-2.90 2.90z" fill="#1f6f3c"/><path d="M0.10 215.10h2.90l-2.90 2.90z" fill="#1f6f3c"/><rect x="0.35" y="224.50" width="56.80" height="24.10" fill="#fff" stroke="#8e8e8e" stroke-width=".65"/><path transform="translate(0.35 224.50)" d="M5.00 9.16L5.78 10.39L6.56 11.68L7.34 12.98L8.12 14.23L8.90 15.38L9.68 16.36L10.46 17.15L11.24 17.70L12.02 17.98L12.80 17.99L13.58 17.70L14.36 17.12L15.14 16.28L15.92 15.19L16.70 13.92L17.48 12.50L18.26 11.00L19.04 9.46L19.82 7.96L20.60 6.55L21.38 5.28L22.16 4.21L22.94 3.37L23.72 2.80L24.50 2.53L25.28 2.56L26.06 2.94L26.84 3.65L27.62 4.68L28.40 5.97L29.18 7.48L29.96 9.16L30.74 10.93L31.52 12.74L32.30 14.52L33.08 16.19L33.86 17.69L34.64 18.97L35.42 19.98L36.20 20.68L36.98 21.05L37.76 21.06L38.54 20.74L39.32 20.10L40.10 19.16L40.88 17.97L41.66 16.57L42.44 15.01L43.22 13.37L44.00 11.71L44.78 10.09L45.56 8.58L46.34 7.25L47.12 6.15L47.90 5.32L48.68 4.79L49.46 4.60L50.24 4.74L51.02 5.21L51.80 5.99" fill="none" stroke="#7676c0" stroke-width=".8"/><path d="M86.05 215.10h2.90l-2.90 2.90z" fill="#1f6f3c"/><path d="M86.05 223.70h2.90l-2.90 2.90z" fill="#1f6f3c"/><path d="M86.05 232.30h2.90l-2.90 2.90z" fill="#1f6f3c"/><path d="M114.70 8.70h2.90l-2.90 2.90z" fill="#1f6f3c"/><rect x="114.95" y="18.10" width="56.80" height="24.10" fill="#fff" stroke="#8e8e8e" stroke-width=".65"/><path transform="translate(114.95 18.10)" d="M5.00 16.74L5.78 15.05L6.56 13.22L7.34 11.33L8.12 9.46L8.90 7.68L9.68 6.08L10.46 4.72L11.24 3.64L12.02 2.91L12.80 2.54L13.58 2.56L14.36 2.96L15.14 3.72L15.92 4.82L16.70 6.21L17.48 7.83L18.26 9.61L19.04 11.48L19.82 13.37L20.60 15.19L21.38 16.88L22.16 18.35L22.94 19.55L23.72 20.43L24.50 20.95L25.28 21.10L26.06 20.90L26.84 20.38L27.62 19.58L28.40 18.51L29.18 17.22L29.96 15.77L30.74 14.20L31.52 12.58L32.30 10.98L33.08 9.45L33.86 8.06L34.64 6.86L35.42 5.90L36.20 5.21L36.98 4.83L37.76 4.76L38.54 5.03L39.32 5.62L40.10 6.50L40.88 7.65L41.66 9.00L42.44 10.49L43.22 12.05L44.00 13.62L44.78 15.12L45.56 16.49L46.34 17.65L47.12 18.56L47.90 19.18L48.68 19.47L49.46 19.44L50.24 19.10L51.02 18.49L51.80 17.61" fill="none" stroke="#7676c0" stroke-width=".8"/><path d="M200.65 8.70h2.90l-2.90 2.90z" fill="#1f6f3c"/><path d="M200.65 17.30h2.90l-2.90 2.90z" fill="#1f6f3c"/><path d="M200.65 25.90h2.90l-2.90 2.90z" fill="#1f6f3c"/><path d="M200.65 34.50h2.90l-2.90 2.90z" fill="#1f6f3c"/><path d="M114.70 43.10h2.90l-2.90 2.90z" fill="#1f6f3c"/><rect x="114.95" y="52.50" width="56.80" height="24.10" fill="#fff" stroke="#8e8e8e" stroke-width=".65"/><path transform="translate(114.95 52.50)" d="M5.00 18.42L5.78 17.16L6.56 15.70L7.34 14.08L8.12 12.37L8.90 10.62L9.68 8.90L10.46 7.29L11.24 5.83L12.02 4.59L12.80 3.61L13.58 2.92L14.36 2.56L15.14 2.53L15.92 2.87L16.70 3.58L17.48 4.61L18.26 5.93L19.04 7.49L19.82 9.22L20.60 11.06L21.38 12.93L22.16 14.75L22.94 16.45L23.72 17.96L24.50 19.23L25.28 20.20L26.06 20.83L26.84 21.09L27.62 21.00L28.40 20.61L29.18 19.93L29.96 18.99L30.74 17.82L31.52 16.48L32.30 15.00L33.08 13.45L33.86 11.90L34.64 10.39L35.42 8.99L36.20 7.75L36.98 6.72L37.76 5.93L38.54 5.43L39.32 5.23L40.10 5.33L40.88 5.75L41.66 6.45L42.44 7.42L43.22 8.60L44.00 9.94L44.78 11.38L45.56 12.85L46.34 14.30L47.12 15.64L47.90 16.82L48.68 17.78L49.46 18.49L50.24 18.90L51.02 19.01L51.80 18.82" fill="none" stroke="#7676c0" stroke-width=".8"/><path d="M200.65 43.10h2.90l-2.90 2.90z" fill="#1f6f3c"/><path d="M200.65 51.70h2.90l-2.90 2.90z" fill="#1f6f3c"/><path d="M200.65 60.30h2.90l-2.90 2.90z" fill="#1f6f3c"/><path d="M200.65 68.90h2.90l-2.90 2.90z" fill="#1f6f3c"/><path d="M114.70 77.50h2.90l-2.90 2.90z" fill="#1f6f3c"/><rect x="114.95" y="86.90" width="56.80" height="24.10" fill="#fff" stroke="#8e8e8e" stroke-width=".65"/><path transform="translate(114.95 86.90)" d="M5.00 19.85L5.78 19.31L6.56 18.49L7.34 17.39L8.12 16.07L8.90 14.58L9.68 12.96L10.46 11.28L11.24 9.60L12.02 7.99L12.80 6.49L13.58 5.17L14.36 4.08L15.14 3.25L15.92 2.72L16.70 2.50L17.48 2.62L18.26 3.10L19.04 3.90L19.82 5.01L20.60 6.38L21.38 7.96L22.16 9.69L22.94 11.50L23.72 13.31L24.50 15.08L25.28 16.71L26.06 18.16L26.84 19.36L27.62 20.27L28.40 20.86L29.18 21.10L29.96 21.00L30.74 20.60L31.52 19.93L32.30 19.00L33.08 17.86L33.86 16.54L34.64 15.10L35.42 13.58L36.20 12.06L36.98 10.59L37.76 9.22L38.54 8.00L39.32 6.99L40.10 6.21L40.88 5.71L41.66 5.50L42.44 5.59L43.22 5.97L44.00 6.62L44.78 7.52L45.56 8.63L46.34 9.89L47.12 11.26L47.90 12.66L48.68 14.04L49.46 15.34L50.24 16.50L51.02 17.46L51.80 18.19" fill="none" stroke="#7676c0" stroke-width=".8"/><path d="M200.65 77.50h2.90l-2.90 2.90z" fill="#1f6f3c"/><path d="M200.65 86.10h2.90l-2.90 2.90z" fill="#1f6f3c"/><path d="M200.65 94.70h2.90l-2.90 2.90z" fill="#1f6f3c"/><path d="M114.70 111.90h2.90l-2.90 2.90z" fill="#1f6f3c"/><rect x="114.95" y="121.30" width="56.80" height="24.10" fill="#fff" stroke="#8e8e8e" stroke-width=".65"/><path transform="translate(114.95 121.30)" d="M5.00 18.44L5.78 18.93L6.56 19.12L7.34 18.99L8.12 18.55L8.90 17.83L9.68 16.84L10.46 15.62L11.24 14.23L12.02 12.71L12.80 11.11L13.58 9.51L14.36 7.95L15.14 6.50L15.92 5.21L16.70 4.13L17.48 3.31L18.26 2.76L19.04 2.51L19.82 2.59L20.60 2.99L21.38 3.72L22.16 4.75L22.94 6.03L23.72 7.52L24.50 9.17L25.28 10.91L26.06 12.69L26.84 14.43L27.62 16.08L28.40 17.57L29.18 18.85L29.96 19.88L30.74 20.61L31.52 21.01L32.30 21.09L33.08 20.84L33.86 20.29L34.64 19.46L35.42 18.39L36.20 17.10L36.98 15.66L37.76 14.12L38.54 12.54L39.32 10.98L40.10 9.49L40.88 8.15L41.66 7.00L42.44 6.09L43.22 5.44L44.00 5.09L44.78 5.05L45.56 5.32L46.34 5.87L47.12 6.69L47.90 7.74L48.68 8.98L49.46 10.36L50.24 11.80L51.02 13.26L51.80 14.66" fill="none" stroke="#7676c0" stroke-width=".8"/><path d="M200.65 111.90h2.90l-2.90 2.90z" fill="#1f6f3c"/><path d="M200.65 120.50h2.90l-2.90 2.90z" fill="#1f6f3c"/><path d="M200.65 129.10h2.90l-2.90 2.90z" fill="#1f6f3c"/><path d="M200.65 137.70h2.90l-2.90 2.90z" fill="#1f6f3c"/><path d="M114.70 146.30h2.90l-2.90 2.90z" fill="#1f6f3c"/><rect x="114.95" y="155.70" width="56.80" height="24.10" fill="#fff" stroke="#8e8e8e" stroke-width=".65"/><path transform="translate(114.95 155.70)" d="M5.00 14.30L5.78 15.52L6.56 16.58L7.34 17.45L8.12 18.07L8.90 18.42L9.68 18.49L10.46 18.26L11.24 17.72L12.02 16.90L12.80 15.84L13.58 14.56L14.36 13.12L15.14 11.59L15.92 10.01L16.70 8.45L17.48 6.97L18.26 5.62L19.04 4.47L19.82 3.56L20.60 2.91L21.38 2.56L22.16 2.52L22.94 2.82L23.72 3.44L24.50 4.37L25.28 5.57L26.06 7.00L26.84 8.60L27.62 10.32L28.40 12.10L29.18 13.86L29.96 15.55L30.74 17.10L31.52 18.45L32.30 19.57L33.08 20.40L33.86 20.92L34.64 21.10L35.42 20.94L36.20 20.46L36.98 19.66L37.76 18.58L38.54 17.26L39.32 15.76L40.10 14.13L40.88 12.44L41.66 10.75L42.44 9.14L43.22 7.66L44.00 6.38L44.78 5.35L45.56 4.60L46.34 4.16L47.12 4.07L47.90 4.30L48.68 4.86L49.46 5.73L50.24 6.85L51.02 8.19L51.80 9.69" fill="none" stroke="#7676c0" stroke-width=".8"/><path d="M200.65 146.30h2.90l-2.90 2.90z" fill="#1f6f3c"/><path d="M200.65 154.90h2.90l-2.90 2.90z" fill="#1f6f3c"/><path d="M200.65 163.50h2.90l-2.90 2.90z" fill="#1f6f3c"/><path d="M200.65 172.10h2.90l-2.90 2.90z" fill="#1f6f3c"/><path d="M114.70 180.70h2.90l-2.90 2.90z" fill="#1f6f3c"/><rect x="114.95" y="190.10" width="56.80" height="24.10" fill="#fff" stroke="#8e8e8e" stroke-width=".65"/><path transform="translate(114.95 190.10)" d="M5.00 9.90L5.78 11.30L6.56 12.71L7.34 14.09L8.12 15.37L8.90 16.50L9.68 17.42L10.46 18.10L11.24 18.51L12.02 18.64L12.80 18.45L13.58 17.94L14.36 17.14L15.14 16.07L15.92 14.78L16.70 13.32L17.48 11.75L18.26 10.13L19.04 8.53L19.82 7.01L20.60 5.64L21.38 4.46L22.16 3.53L22.94 2.88L23.72 2.55L24.50 2.54L25.28 2.87L26.06 3.54L26.84 4.51L27.62 5.76L28.40 7.24L29.18 8.88L29.96 10.64L30.74 12.44L31.52 14.21L32.30 15.90L33.08 17.43L33.86 18.75L34.64 19.81L35.42 20.57L36.20 21.00L36.98 21.09L37.76 20.82L38.54 20.21L39.32 19.28L40.10 18.06L40.88 16.61L41.66 14.99L42.44 13.25L43.22 11.48L44.00 9.74L44.78 8.09L45.56 6.62L46.34 5.37L47.12 4.40L47.90 3.75L48.68 3.44L49.46 3.48L50.24 3.89L51.02 4.63L51.80 5.68" fill="none" stroke="#7676c0" stroke-width=".8"/><path d="M200.65 180.70h2.90l-2.90 2.90z" fill="#1f6f3c"/><path d="M200.65 189.30h2.90l-2.90 2.90z" fill="#1f6f3c"/><path d="M200.65 197.90h2.90l-2.90 2.90z" fill="#1f6f3c"/><path d="M200.65 206.50h2.90l-2.90 2.90z" fill="#1f6f3c"/><path d="M114.70 215.10h2.90l-2.90 2.90z" fill="#1f6f3c"/><rect x="114.95" y="224.50" width="56.80" height="24.10" fill="#fff" stroke="#8e8e8e" stroke-width=".65"/><path transform="translate(114.95 224.50)" d="M5.00 6.42L5.78 7.57L6.56 8.91L7.34 10.37L8.12 11.89L8.90 13.40L9.68 14.84L10.46 16.15L11.24 17.27L12.02 18.15L12.80 18.76L13.58 19.06L14.36 19.05L15.14 18.71L15.92 18.06L16.70 17.13L17.48 15.95L18.26 14.56L19.04 13.03L19.82 11.41L20.60 9.77L21.38 8.17L22.16 6.67L22.94 5.33L23.72 4.21L24.50 3.34L25.28 2.77L26.06 2.51L26.84 2.59L27.62 3.04L28.40 3.84L29.18 4.95L29.96 6.35L30.74 7.96L31.52 9.72L32.30 11.57L33.08 13.42L33.86 15.21L34.64 16.87L35.42 18.32L36.20 19.51L36.98 20.39L37.76 20.93L38.54 21.10L39.32 20.90L40.10 20.34L40.88 19.45L41.66 18.26L42.44 16.82L43.22 15.19L44.00 13.44L44.78 11.64L45.56 9.87L46.34 8.20L47.12 6.70L47.90 5.43L48.68 4.45L49.46 3.79L50.24 3.48L51.02 3.54L51.80 3.97" fill="none" stroke="#7676c0" stroke-width=".8"/><path d="M200.65 215.10h2.90l-2.90 2.90z" fill="#1f6f3c"/><path d="M200.65 223.70h2.90l-2.90 2.90z" fill="#1f6f3c"/><path d="M200.65 232.30h2.90l-2.90 2.90z" fill="#1f6f3c"/><rect x="200.55" y="232.20" width="28.65" height="8.60" fill="none" stroke="#2f7d4f" stroke-width=".75"/></svg>
<div class="abs" style="left:186.00px;top:224.00px;width:7.9px;height:7.4px;background:#f5f3ee;box-shadow:0 0 0 .4px #d8d8d8"></div>
<svg class="abs" style="left:186.65px;top:224.60px" width="6.6" height="6.2" viewBox="0 0 15 14"><path d="M7.5 1L14 13H1z" fill="#f5c04a" stroke="#d88a1c" stroke-width="1"/><path d="M7.5 5v4.3M7.5 10.6v1.2" stroke="#7a3b00" stroke-width="1.3"/></svg>
</div>
<div class="abs" style="left:255px;top:78px;width:8.2px;height:246px;background:#f1f1f1"></div>
<svg class="abs" style="left:256.6px;top:79.6px" width="5" height="3" viewBox="0 0 10 6"><path d="M5 0l5 6H0z" fill="#555"/></svg>
<div class="abs" style="left:257.4px;top:84.4px;width:3.6px;height:92.4px;background:#5f5f5f;border-radius:1.8px"></div>
<svg class="abs" style="left:256.6px;top:320px" width="5" height="3" viewBox="0 0 10 6"><path d="M5 6l5-6H0z" fill="#555"/></svg>
<div class="abs" style="left:0;top:324px;width:100%;height:15.4px;background:#ededed"></div>
<svg class="abs" style="left:18.9px;top:329px" width="2.6" height="4.4" viewBox="0 0 2.6 4.4"><path d="M2.300.2L.4 2.200 2.300 4.200" fill="none" stroke="#b2b2b2" stroke-width=".8"/></svg>
<svg class="abs" style="left:33.3px;top:329px" width="2.6" height="4.4" viewBox="0 0 2.6 4.4"><path d="M.3.2L2.200 2.200 .3 4.200" fill="none" stroke="#b2b2b2" stroke-width=".8"/></svg>
<div class="abs" style="left:58px;top:323.6px;width:25.4px;height:13px;background:#fff;border-radius:0 0 2.5px 2.5px;box-shadow:0 .3px .8px rgba(0,0,0,.12)"></div>
<div class="abs" style="left:58px;top:327px;width:25.4px;text-align:center;font-size:5.7px;font-weight:bold;color:#2b2b2b;letter-spacing:-.1px">Sheet1</div>
<div class="abs" style="left:61.5px;top:335px;width:18px;height:1px;background:#3f8a5f"></div>
<svg class="abs" style="left:104.1px;top:328.900px" width="5" height="5" viewBox="0 0 10 10"><path d="M5 0v10M0 5h10" stroke="#3c3c3c" stroke-width="1.600"/></svg>
<div class="abs" style="left:162px;top:328.4px;width:.9px;height:.9px;background:#555;border-radius:50%"></div>
<div class="abs" style="left:162px;top:330.6px;width:.9px;height:.9px;background:#555;border-radius:50%"></div>
<div class="abs" style="left:162px;top:332.8px;width:.9px;height:.9px;background:#555;border-radius:50%"></div>
<svg class="abs" style="left:172px;top:328.8px" width="3.2" height="4.6" viewBox="0 0 6 9"><path d="M6 0v9L0 4.5z" fill="#444"/></svg>
<div class="abs" style="left:177.4px;top:329.1px;width:62.6px;height:4px;background:#5f5f5f;border-radius:2px"></div>
<svg class="abs" style="left:249.6px;top:328.8px" width="3.2" height="4.6" viewBox="0 0 6 9"><path d="M0 0v9l6-4.5z" fill="#444"/></svg>
<div class="abs" style="left:0;top:339.4px;width:100%;height:8.8px;background:#f4f4f4;border-bottom:.8px solid #86bb9b;box-sizing:border-box"></div>
<div class="abs" style="left:10.3px;top:341.5px;font-size:4.2px;color:#4a4a4a;font-weight:bold">Prêt</div>
<div class="abs" style="left:126px;top:339.6px;width:17px;height:8px;background:#dedede"></div>
<svg class="abs" style="left:131.6px;top:340.800px" width="5.700" height="5.700" viewBox="0 0 11 10" preserveAspectRatio="none"><path d="M.5.5h10v9H.5zM.5 3.5h10M.5 6.5h10M4 .5v9M7.4 .5v9" fill="none" stroke="#444" stroke-width="1"/></svg>
<svg class="abs" style="left:149.4px;top:340.800px" width="5.700" height="5.700" viewBox="0 0 11 10" preserveAspectRatio="none"><path d="M.5.5h10v9H.5z" fill="none" stroke="#555" stroke-width="1"/><path d="M2.5 2.5h6v5h-6z" fill="none" stroke="#555" stroke-width="1"/></svg>
<svg class="abs" style="left:167.2px;top:340.800px" width="5.700" height="5.700" viewBox="0 0 11 10" preserveAspectRatio="none"><path d="M.5.5h10v9H.5z" fill="none" stroke="#555" stroke-width="1"/><path d="M.5 6h4.5V.5" fill="none" stroke="#555" stroke-width="1"/></svg>
<div class="abs" style="left:182.6px;top:343.5px;width:2.8px;height:.5px;background:#555"></div>
<div class="abs" style="left:188px;top:343.5px;width:43px;height:.5px;background:#a8a8a8"></div>
<div class="abs" style="left:209.3px;top:340.9px;width:1.6px;height:5.6px;background:#555;border-radius:.5px"></div>
<svg class="abs" style="left:233.4px;top:342.1px" width="3.4" height="3.4" viewBox="0 0 10 10"><path d="M5 0v10M0 5h10" stroke="#555" stroke-width="1.5"/></svg>
<div class="abs" style="left:242.6px;top:341.5px;font-size:4.5px;color:#6a6a6a">100%</div>
</div></div>
<div class="blur"><div class="br">
<div class="tabstrip">
<div class="tsbtn"><svg class="abs" style="left:4px;top:4.7px" width="4" height="2.8" viewBox="0 0 10 7"><path d="M1.2 1.400l3.800 3.800 3.800-3.800" fill="none" stroke="#2a2a2a" stroke-width="2.600"/></svg></div>
<div class="tab"><svg class="abs" style="left:3.6px;top:2.8px" width="6.4" height="6.4" viewBox="0 0 16 16"><circle cx="8" cy="8" r="6.8" fill="#fff" stroke="#3b3b3b" stroke-width="1.8"/><path d="M2 6c2 0 3 1 3 2.5S6.5 10 6.5 12v2.2C3.5 13.5 1.4 10 2 6zM7 1.6c1 .8 1 2 2.2 2.4s1.3 1.6.3 2.4-.5 2 1 2.2 2 1 1.6 2.4c2-1.6 2.6-4.6 1.2-7S9.500 1 7 1.600z" fill="#3b3b3b"/></svg><div class="tabtitle">tide_table__Lisbon_January_2024</div><svg class="abs" style="left:94.6px;top:4.4px" width="4.2" height="4.2" viewBox="0 0 8 8"><path d="M1 1l6 6M7 1L1 7" stroke="#333" stroke-width="1.5"/></svg></div>
<svg class="abs" style="left:14.4px;top:15.5px" width="3" height="3" viewBox="0 0 3 3"><path d="M3 0v3H0A3 3 0 0 0 3 0z" fill="#fff"/></svg>
<svg class="abs" style="left:121.9px;top:15.5px" width="3" height="3" viewBox="0 0 3 3"><path d="M0 0v3h3A3 3 0 0 1 0 0z" fill="#fff"/></svg>
<svg class="abs" style="left:128.6px;top:7.8px" width="5.2" height="5.2" viewBox="0 0 10 10"><path d="M5 0v10M0 5h10" stroke="#6a6a6a" stroke-width="1.2"/></svg>
<div class="abs" style="left:170.9px;top:9.5px;width:5.2px;height:.6px;background:#a4a9b1"></div>
<svg class="abs" style="left:190.8px;top:7px" width="5.6" height="5" viewBox="0 0 5.6 5"><rect x=".4" y=".4" width="4.8" height="4.2" fill="none" stroke="#a4a9b1" stroke-width=".6"/></svg>
<svg class="abs" style="left:212.1px;top:7.1px" width="4.8" height="4.8" viewBox="0 0 10 10"><path d="M0 0l10 10M10 0L0 10" stroke="#a4a9b1" stroke-width="1.2"/></svg>
</div>
<div class="toolbar">
<svg class="abs" style="left:6px;top:8px" width="6" height="5.4" viewBox="0 0 12 11"><path d="M6 .8L1.2 5.5 6 10.2M1.5 5.500H11.500" fill="none" stroke="#b4b8bd" stroke-width="1.4"/></svg>
<svg class="abs" style="left:22px;top:8px" width="6" height="5.4" viewBox="0 0 12 11"><path d="M6 .8l4.800 4.700L6 10.200M10.500 5.500H.5" fill="none" stroke="#a4a8ad" stroke-width="1.4"/></svg>
<svg class="abs" style="left:38px;top:7.3px" width="6.6" height="6.6" viewBox="0 0 14 14"><path d="M11.800 8.500A5 5 0 1 1 10.600 3.400" fill="none" stroke="#3a3a3a" stroke-width="2.400"/><path d="M7.600 .2h5.800v5.800z" fill="#3a3a3a"/></svg>
<div class="omni"><div class="chip"><svg class="abs" style="left:2.4px;top:2.5px" width="6.4" height="6.4" viewBox="0 0 14 14"><circle cx="7" cy="7" r="5.600" fill="none" stroke="#2a2a2a" stroke-width="1.800"/><path d="M7 6.200v4M7 3.400v1.500" stroke="#2a2a2a" stroke-width="1.800"/></svg><span class="abs" style="left:10.400px;top:2.600px;font-size:5.600px;color:#1a1a1a;-webkit-text-stroke:.18px #1a1a1a;letter-spacing:-.05px">Fichier</span></div><span class="abs" style="left:35.600px;top:3.7px;font-size:6.0px;color:#5a5a5a">C:/Top...</span><svg class="abs" style="left:63.800px;top:3.800px" width="7.200" height="7.200" viewBox="0 0 14 14"><circle cx="5.600" cy="5.600" r="4" fill="none" stroke="#444" stroke-width="1.500"/><path d="M8.600 8.600L13 13" stroke="#444" stroke-width="1.900"/><path d="M3.800 5.600h3.600" stroke="#444" stroke-width="1.100"/></svg><svg class="abs" style="left:77.600px;top:3.400px" width="7.800" height="7.600" viewBox="0 0 16 15"><path d="M8 1.400l2 4.300 4.700.5-3.500 3.200 1 4.600L8 11.600 3.800 14l1-4.600L1.300 6.200 6 5.700z" fill="none" stroke="#333" stroke-width="1.500"/></svg></div>
<svg class="abs" style="left:154.6px;top:6.300px" width="7.6" height="8.4" viewBox="0 0 15 16.500"><path d="M1.500 5h3.200c-.7-3 3.700-3 3 0H11v3.300c3-.7 3 3.700 0 3V14.800H1.500V11.200c2.600.4 2.600-3.200 0-2.800z" fill="none" stroke="#3a3a3a" stroke-width="1.700" stroke-linejoin="round"/></svg>
<div class="abs" style="left:170.3px;top:5.600px;width:.5px;height:10px;background:#dadde1"></div>
<svg class="abs" style="left:178.800px;top:7.4px" width="6.900" height="6.900" viewBox="0 0 14 14"><rect x="1" y="1.200" width="12" height="11.600" rx="1.500" fill="none" stroke="#333" stroke-width="1.500"/><rect x="7.200" y="1.200" width="5.800" height="11.600" fill="#333"/></svg>
<svg class="abs" style="left:194.800px;top:6.600px" width="8.300" height="8.300" viewBox="0 0 18 18"><circle cx="9" cy="9" r="8.500" fill="#23a8f2"/><path d="M5.500 4.500c2.500-.5 6 3 7 8-3-1-6.500-4-7-8z" fill="#fff"/><path d="M5 6l7.500 7" stroke="#23a8f2" stroke-width="1"/></svg>
<div class="abs" style="left:214.600px;top:7.8px;width:1.100px;height:1.100px;background:#555;border-radius:50%"></div>
<div class="abs" style="left:214.600px;top:10.6px;width:1.100px;height:1.100px;background:#555;border-radius:50%"></div>
<div class="abs" style="left:214.600px;top:13.4px;width:1.100px;height:1.100px;background:#555;border-radius:50%"></div>
</div>
<div class="content">
<div class="cap">Tide table for Lisbon [January 2024]</div>
</div>
<svg class="abs" style="left:2.04px;top:48.38px" width="166.64" height="288.19">
<rect x="0" y="0" width="166.64" height="288.19" fill="#868686"/>
<rect x="1.65" y="1.65" width="12.39" height="7.75" fill="#efefef"/>
<rect x="2.20" y="2.20" width="11.29" height="6.65" fill="#d6d6d6"/>
<rect x="15.69" y="1.65" width="12.15" height="7.75" fill="#efefef"/>
<rect x="16.24" y="2.20" width="11.05" height="6.65" fill="#d6d6d6"/>
<rect x="29.49" y="1.65" width="13.85" height="7.75" fill="#efefef"/>
<rect x="30.04" y="2.20" width="12.75" height="6.65" fill="#d6d6d6"/>
<rect x="44.99" y="1.65" width="17.15" height="7.75" fill="#efefef"/>
<rect x="45.54" y="2.20" width="16.05" height="6.65" fill="#d6d6d6"/>
<rect x="63.79" y="1.65" width="13.55" height="7.75" fill="#efefef"/>
<rect x="64.34" y="2.20" width="12.45" height="6.65" fill="#d6d6d6"/>
<rect x="78.99" y="1.65" width="17.45" height="7.75" fill="#efefef"/>
<rect x="79.54" y="2.20" width="16.35" height="6.65" fill="#d6d6d6"/>
<rect x="98.09" y="1.65" width="14.05" height="7.75" fill="#efefef"/>
<rect x="98.64" y="2.20" width="12.95" height="6.65" fill="#d6d6d6"/>
<rect x="113.79" y="1.65" width="17.05" height="7.75" fill="#efefef"/>
<rect x="114.34" y="2.20" width="15.95" height="6.65" fill="#d6d6d6"/>
<rect x="132.49" y="1.65" width="14.10" height="7.75" fill="#efefef"/>
<rect x="133.04" y="2.20" width="13.00" height="6.65" fill="#d6d6d6"/>
<rect x="148.24" y="1.65" width="16.75" height="7.75" fill="#efefef"/>
<rect x="148.79" y="2.20" width="15.65" height="6.65" fill="#d6d6d6"/>
<rect x="1.65" y="11.05" width="12.39" height="7.29" fill="#fff"/>
<rect x="15.69" y="11.05" width="12.15" height="7.29" fill="#fff"/>
<rect x="29.49" y="11.05" width="13.85" height="7.29" fill="#fff"/>
<rect x="44.99" y="11.05" width="17.15" height="7.29" fill="#fff"/>
<rect x="63.79" y="11.05" width="13.55" height="7.29" fill="#fff"/>
<rect x="78.99" y="11.05" width="17.45" height="7.29" fill="#fff"/>
<rect x="98.09" y="11.05" width="14.05" height="7.29" fill="#fff"/>
<rect x="113.79" y="11.05" width="17.05" height="7.29" fill="#fff"/>
<rect x="132.49" y="11.05" width="14.10" height="7.29" fill="#fff"/>
<rect x="148.24" y="11.05" width="16.75" height="7.29" fill="#fff"/>
<rect x="1.65" y="19.99" width="12.39" height="7.29" fill="#fff"/>
<rect x="15.69" y="19.99" width="12.15" height="7.29" fill="#fff"/>
<rect x="29.49" y="19.99" width="13.85" height="7.29" fill="#fff"/>
<rect x="44.99" y="19.99" width="17.15" height="7.29" fill="#fff"/>
<rect x="63.79" y="19.99" width="13.55" height="7.29" fill="#fff"/>
<rect x="78.99" y="19.99" width="17.45" height="7.29" fill="#fff"/>
<rect x="98.09" y="19.99" width="14.05" height="7.29" fill="#fff"/>
<rect x="113.79" y="19.99" width="17.05" height="7.29" fill="#fff"/>
<rect x="132.49" y="19.99" width="14.10" height="7.29" fill="#fff"/>
<rect x="148.24" y="19.99" width="16.75" height="7.29" fill="#fff"/>
<rect x="1.65" y="28.93" width="12.39" height="7.29" fill="#fff"/>
<rect x="15.69" y="28.93" width="12.15" height="7.29" fill="#fff"/>
<rect x="29.49" y="28.93" width="13.85" height="7.29" fill="#fff"/>
<rect x="44.99" y="28.93" width="17.15" height="7.29" fill="#fff"/>
<rect x="63.79" y="28.93" width="13.55" height="7.29" fill="#fff"/>
<rect x="78.99" y="28.93" width="17.45" height="7.29" fill="#fff"/>
<rect x="98.09" y="28.93" width="14.05" height="7.29" fill="#fff"/>
<rect x="113.79" y="28.93" width="17.05" height="7.29" fill="#fff"/>
<rect x="132.49" y="28.93" width="14.10" height="7.29" fill="#fff"/>
<rect x="148.24" y="28.93" width="16.75" height="7.29" fill="#fff"/>
<rect x="1.65" y="37.87" width="12.39" height="7.29" fill="#fff"/>
<rect x="15.69" y="37.87" width="12.15" height="7.29" fill="#fff"/>
<rect x="29.49" y="37.87" width="13.85" height="7.29" fill="#fff"/>
<rect x="44.99" y="37.87" width="17.15" height="7.29" fill="#fff"/>
<rect x="63.79" y="37.87" width="13.55" height="7.29" fill="#fff"/>
<rect x="78.99" y="37.87" width="17.45" height="7.29" fill="#fff"/>
<rect x="98.09" y="37.87" width="14.05" height="7.29" fill="#fff"/>
<rect x="113.79" y="37.87" width="17.05" height="7.29" fill="#fff"/>
<rect x="132.49" y="37.87" width="14.10" height="7.29" fill="#fff"/>
<rect x="148.24" y="37.87" width="16.75" height="7.29" fill="#fff"/>
<rect x="1.65" y="46.81" width="12.39" height="7.29" fill="#fff"/>
<rect x="15.69" y="46.81" width="12.15" height="7.29" fill="#fff"/>
<rect x="29.49" y="46.81" width="13.85" height="7.29" fill="#fff"/>
<rect x="44.99" y="46.81" width="17.15" height="7.29" fill="#fff"/>
<rect x="63.79" y="46.81" width="13.55" height="7.29" fill="#fff"/>
<rect x="78.99" y="46.81" width="17.45" height="7.29" fill="#fff"/>
<rect x="98.09" y="46.81" width="14.05" height="7.29" fill="#fff"/>
<rect x="113.79" y="46.81" width="17.05" height="7.29" fill="#fff"/>
<rect x="132.49" y="46.81" width="14.10" height="7.29" fill="#fff"/>
<rect x="148.24" y="46.81" width="16.75" height="7.29" fill="#fff"/>
<rect x="1.65" y="55.75" width="12.39" height="7.29" fill="#fff"/>
<rect x="15.69" y="55.75" width="12.15" height="7.29" fill="#fff"/>
<rect x="29.49" y="55.75" width="13.85" height="7.29" fill="#fff"/>
<rect x="44.99" y="55.75" width="17.15" height="7.29" fill="#fff"/>
<rect x="63.79" y="55.75" width="13.55" height="7.29" fill="#fff"/>
<rect x="78.99" y="55.75" width="17.45" height="7.29" fill="#fff"/>
<rect x="98.09" y="55.75" width="14.05" height="7.29" fill="#fff"/>
<rect x="113.79" y="55.75" width="17.05" height="7.29" fill="#fff"/>
<rect x="132.49" y="55.75" width="14.10" height="7.29" fill="#fff"/>
<rect x="148.24" y="55.75" width="16.75" height="7.29" fill="#fff"/>
<rect x="1.65" y="64.69" width="12.39" height="7.29" fill="#fff"/>
<rect x="15.69" y="64.69" width="12.15" height="7.29" fill="#fff"/>
<rect x="29.49" y="64.69" width="13.85" height="7.29" fill="#fff"/>
<rect x="44.99" y="64.69" width="17.15" height="7.29" fill="#fff"/>
<rect x="63.79" y="64.69" width="13.55" height="7.29" fill="#fff"/>
<rect x="78.99" y="64.69" width="17.45" height="7.29" fill="#fff"/>
<rect x="98.09" y="64.69" width="14.05" height="7.29" fill="#fff"/>
<rect x="113.79" y="64.69" width="17.05" height="7.29" fill="#fff"/>
<rect x="132.49" y="64.69" width="14.10" height="7.29" fill="#fff"/>
<rect x="148.24" y="64.69" width="16.75" height="7.29" fill="#fff"/>
<rect x="1.65" y="73.63" width="12.39" height="7.29" fill="#fff"/>
<rect x="15.69" y="73.63" width="12.15" height="7.29" fill="#fff"/>
<rect x="29.49" y="73.63" width="13.85" height="7.29" fill="#fff"/>
<rect x="44.99" y="73.63" width="17.15" height="7.29" fill="#fff"/>
<rect x="63.79" y="73.63" width="13.55" height="7.29" fill="#fff"/>
<rect x="78.99" y="73.63" width="17.45" height="7.29" fill="#fff"/>
<rect x="98.09" y="73.63" width="14.05" height="7.29" fill="#fff"/>
<rect x="113.79" y="73.63" width="17.05" height="7.29" fill="#fff"/>
<rect x="132.49" y="73.63" width="14.10" height="7.29" fill="#fff"/>
<rect x="148.24" y="73.63" width="16.75" height="7.29" fill="#fff"/>
<rect x="1.65" y="82.57" width="12.39" height="7.29" fill="#fff"/>
<rect x="15.69" y="82.57" width="12.15" height="7.29" fill="#fff"/>
<rect x="29.49" y="82.57" width="13.85" height="7.29" fill="#fff"/>
<rect x="44.99" y="82.57" width="17.15" height="7.29" fill="#fff"/>
<rect x="63.79" y="82.57" width="13.55" height="7.29" fill="#fff"/>
<rect x="78.99" y="82.57" width="17.45" height="7.29" fill="#fff"/>
<rect x="98.09" y="82.57" width="14.05" height="7.29" fill="#fff"/>
<rect x="113.79" y="82.57" width="17.05" height="7.29" fill="#fff"/>
<rect x="132.49" y="82.57" width="14.10" height="7.29" fill="#fff"/>
<rect x="148.24" y="82.57" width="16.75" height="7.29" fill="#fff"/>
<rect x="1.65" y="91.51" width="12.39" height="7.29" fill="#fff"/>
<rect x="15.69" y="91.51" width="12.15" height="7.29" fill="#fff"/>
<rect x="29.49" y="91.51" width="13.85" height="7.29" fill="#fff"/>
<rect x="44.99" y="91.51" width="17.15" height="7.29" fill="#fff"/>
<rect x="63.79" y="91.51" width="13.55" height="7.29" fill="#fff"/>
<rect x="78.99" y="91.51" width="17.45" height="7.29" fill="#fff"/>
<rect x="98.09" y="91.51" width="14.05" height="7.29" fill="#fff"/>
<rect x="113.79" y="91.51" width="17.05" height="7.29" fill="#fff"/>
<rect x="132.49" y="91.51" width="14.10" height="7.29" fill="#fff"/>
<rect x="148.24" y="91.51" width="16.75" height="7.29" fill="#fff"/>
<rect x="1.65" y="100.45" width="12.39" height="7.29" fill="#fff"/>
<rect x="15.69" y="100.45" width="12.15" height="7.29" fill="#fff"/>
<rect x="29.49" y="100.45" width="13.85" height="7.29" fill="#fff"/>
<rect x="44.99" y="100.45" width="17.15" height="7.29" fill="#fff"/>
<rect x="63.79" y="100.45" width="13.55" height="7.29" fill="#fff"/>
<rect x="78.99" y="100.45" width="17.45" height="7.29" fill="#fff"/>
<rect x="98.09" y="100.45" width="14.05" height="7.29" fill="#fff"/>
<rect x="113.79" y="100.45" width="17.05" height="7.29" fill="#fff"/>
<rect x="132.49" y="100.45" width="14.10" height="7.29" fill="#fff"/>
<rect x="148.24" y="100.45" width="16.75" height="7.29" fill="#fff"/>
<rect x="1.65" y="109.39" width="12.39" height="7.29" fill="#fff"/>
<rect x="15.69" y="109.39" width="12.15" height="7.29" fill="#fff"/>
<rect x="29.49" y="109.39" width="13.85" height="7.29" fill="#fff"/>
<rect x="44.99" y="109.39" width="17.15" height="7.29" fill="#fff"/>
<rect x="63.79" y="109.39" width="13.55" height="7.29" fill="#fff"/>
<rect x="78.99" y="109.39" width="17.45" height="7.29" fill="#fff"/>
<rect x="98.09" y="109.39" width="14.05" height="7.29" fill="#fff"/>
<rect x="113.79" y="109.39" width="17.05" height="7.29" fill="#fff"/>
<rect x="132.49" y="109.39" width="14.10" height="7.29" fill="#fff"/>
<rect x="148.24" y="109.39" width="16.75" height="7.29" fill="#fff"/>
<rect x="1.65" y="118.33" width="12.39" height="7.29" fill="#fff"/>
<rect x="15.69" y="118.33" width="12.15" height="7.29" fill="#fff"/>
<rect x="29.49" y="118.33" width="13.85" height="7.29" fill="#fff"/>
<rect x="44.99" y="118.33" width="17.15" height="7.29" fill="#fff"/>
<rect x="63.79" y="118.33" width="13.55" height="7.29" fill="#fff"/>
<rect x="78.99" y="118.33" width="17.45" height="7.29" fill="#fff"/>
<rect x="98.09" y="118.33" width="14.05" height="7.29" fill="#fff"/>
<rect x="113.79" y="118.33" width="17.05" height="7.29" fill="#fff"/>
<rect x="132.49" y="118.33" width="14.10" height="7.29" fill="#fff"/>
<rect x="148.24" y="118.33" width="16.75" height="7.29" fill="#fff"/>
<rect x="1.65" y="127.27" width="12.39" height="7.29" fill="#fff"/>
<rect x="15.69" y="127.27" width="12.15" height="7.29" fill="#fff"/>
<rect x="29.49" y="127.27" width="13.85" height="7.29" fill="#fff"/>
<rect x="44.99" y="127.27" width="17.15" height="7.29" fill="#fff"/>
<rect x="63.79" y="127.27" width="13.55" height="7.29" fill="#fff"/>
<rect x="78.99" y="127.27" width="17.45" height="7.29" fill="#fff"/>
<rect x="98.09" y="127.27" width="14.05" height="7.29" fill="#fff"/>
<rect x="113.79" y="127.27" width="17.05" height="7.29" fill="#fff"/>
<rect x="132.49" y="127.27" width="14.10" height="7.29" fill="#fff"/>
<rect x="148.24" y="127.27" width="16.75" height="7.29" fill="#fff"/>
<rect x="1.65" y="136.21" width="12.39" height="7.29" fill="#fff"/>
<rect x="15.69" y="136.21" width="12.15" height="7.29" fill="#fff"/>
<rect x="29.49" y="136.21" width="13.85" height="7.29" fill="#fff"/>
<rect x="44.99" y="136.21" width="17.15" height="7.29" fill="#fff"/>
<rect x="63.79" y="136.21" width="13.55" height="7.29" fill="#fff"/>
<rect x="78.99" y="136.21" width="17.45" height="7.29" fill="#fff"/>
<rect x="98.09" y="136.21" width="14.05" height="7.29" fill="#fff"/>
<rect x="113.79" y="136.21" width="17.05" height="7.29" fill="#fff"/>
<rect x="132.49" y="136.21" width="14.10" height="7.29" fill="#fff"/>
<rect x="148.24" y="136.21" width="16.75" height="7.29" fill="#fff"/>
<rect x="1.65" y="145.15" width="12.39" height="7.29" fill="#fff"/>
<rect x="15.69" y="145.15" width="12.15" height="7.29" fill="#fff"/>
<rect x="29.49" y="145.15" width="13.85" height="7.29" fill="#fff"/>
<rect x="44.99" y="145.15" width="17.15" height="7.29" fill="#fff"/>
<rect x="63.79" y="145.15" width="13.55" height="7.29" fill="#fff"/>
<rect x="78.99" y="145.15" width="17.45" height="7.29" fill="#fff"/>
<rect x="98.09" y="145.15" width="14.05" height="7.29" fill="#fff"/>
<rect x="113.79" y="145.15" width="17.05" height="7.29" fill="#fff"/>
<rect x="132.49" y="145.15" width="14.10" height="7.29" fill="#fff"/>
<rect x="148.24" y="145.15" width="16.75" height="7.29" fill="#fff"/>
<rect x="1.65" y="154.09" width="12.39" height="7.29" fill="#fff"/>
<rect x="15.69" y="154.09" width="12.15" height="7.29" fill="#fff"/>
<rect x="29.49" y="154.09" width="13.85" height="7.29" fill="#fff"/>
<rect x="44.99" y="154.09" width="17.15" height="7.29" fill="#fff"/>
<rect x="63.79" y="154.09" width="13.55" height="7.29" fill="#fff"/>
<rect x="78.99" y="154.09" width="17.45" height="7.29" fill="#fff"/>
<rect x="98.09" y="154.09" width="14.05" height="7.29" fill="#fff"/>
<rect x="113.79" y="154.09" width="17.05" height="7.29" fill="#fff"/>
<rect x="132.49" y="154.09" width="14.10" height="7.29" fill="#fff"/>
<rect x="148.24" y="154.09" width="16.75" height="7.29" fill="#fff"/>
<rect x="1.65" y="163.03" width="12.39" height="7.29" fill="#fff"/>
<rect x="15.69" y="163.03" width="12.15" height="7.29" fill="#fff"/>
<rect x="29.49" y="163.03" width="13.85" height="7.29" fill="#fff"/>
<rect x="44.99" y="163.03" width="17.15" height="7.29" fill="#fff"/>
<rect x="63.79" y="163.03" width="13.55" height="7.29" fill="#fff"/>
<rect x="78.99" y="163.03" width="17.45" height="7.29" fill="#fff"/>
<rect x="98.09" y="163.03" width="14.05" height="7.29" fill="#fff"/>
<rect x="113.79" y="163.03" width="17.05" height="7.29" fill="#fff"/>
<rect x="132.49" y="163.03" width="14.10" height="7.29" fill="#fff"/>
<rect x="148.24" y="163.03" width="16.75" height="7.29" fill="#fff"/>
<rect x="1.65" y="171.97" width="12.39" height="7.29" fill="#fff"/>
<rect x="15.69" y="171.97" width="12.15" height="7.29" fill="#fff"/>
<rect x="29.49" y="171.97" width="13.85" height="7.29" fill="#fff"/>
<rect x="44.99" y="171.97" width="17.15" height="7.29" fill="#fff"/>
<rect x="63.79" y="171.97" width="13.55" height="7.29" fill="#fff"/>
<rect x="78.99" y="171.97" width="17.45" height="7.29" fill="#fff"/>
<rect x="98.09" y="171.97" width="14.05" height="7.29" fill="#fff"/>
<rect x="113.79" y="171.97" width="17.05" height="7.29" fill="#fff"/>
<rect x="132.49" y="171.97" width="14.10" height="7.29" fill="#fff"/>
<rect x="148.24" y="171.97" width="16.75" height="7.29" fill="#fff"/>
<rect x="1.65" y="180.91" width="12.39" height="7.29" fill="#fff"/>
<rect x="15.69" y="180.91" width="12.15" height="7.29" fill="#fff"/>
<rect x="29.49" y="180.91" width="13.85" height="7.29" fill="#fff"/>
<rect x="44.99" y="180.91" width="17.15" height="7.29" fill="#fff"/>
<rect x="63.79" y="180.91" width="13.55" height="7.29" fill="#fff"/>
<rect x="78.99" y="180.91" width="17.45" height="7.29" fill="#fff"/>
<rect x="98.09" y="180.91" width="14.05" height="7.29" fill="#fff"/>
<rect x="113.79" y="180.91" width="17.05" height="7.29" fill="#fff"/>
<rect x="132.49" y="180.91" width="14.10" height="7.29" fill="#fff"/>
<rect x="148.24" y="180.91" width="16.75" height="7.29" fill="#fff"/>
<rect x="1.65" y="189.85" width="12.39" height="7.29" fill="#fff"/>
<rect x="15.69" y="189.85" width="12.15" height="7.29" fill="#fff"/>
<rect x="29.49" y="189.85" width="13.85" height="7.29" fill="#fff"/>
<rect x="44.99" y="189.85" width="17.15" height="7.29" fill="#fff"/>
<rect x="63.79" y="189.85" width="13.55" height="7.29" fill="#fff"/>
<rect x="78.99" y="189.85" width="17.45" height="7.29" fill="#fff"/>
<rect x="98.09" y="189.85" width="14.05" height="7.29" fill="#fff"/>
<rect x="113.79" y="189.85" width="17.05" height="7.29" fill="#fff"/>
<rect x="132.49" y="189.85" width="14.10" height="7.29" fill="#fff"/>
<rect x="148.24" y="189.85" width="16.75" height="7.29" fill="#fff"/>
<rect x="1.65" y="198.79" width="12.39" height="7.29" fill="#fff"/>
<rect x="15.69" y="198.79" width="12.15" height="7.29" fill="#fff"/>
<rect x="29.49" y="198.79" width="13.85" height="7.29" fill="#fff"/>
<rect x="44.99" y="198.79" width="17.15" height="7.29" fill="#fff"/>
<rect x="63.79" y="198.79" width="13.55" height="7.29" fill="#fff"/>
<rect x="78.99" y="198.79" width="17.45" height="7.29" fill="#fff"/>
<rect x="98.09" y="198.79" width="14.05" height="7.29" fill="#fff"/>
<rect x="113.79" y="198.79" width="17.05" height="7.29" fill="#fff"/>
<rect x="132.49" y="198.79" width="14.10" height="7.29" fill="#fff"/>
<rect x="148.24" y="198.79" width="16.75" height="7.29" fill="#fff"/>
<rect x="1.65" y="207.73" width="12.39" height="7.29" fill="#fff"/>
<rect x="15.69" y="207.73" width="12.15" height="7.29" fill="#fff"/>
<rect x="29.49" y="207.73" width="13.85" height="7.29" fill="#fff"/>
<rect x="44.99" y="207.73" width="17.15" height="7.29" fill="#fff"/>
<rect x="63.79" y="207.73" width="13.55" height="7.29" fill="#fff"/>
<rect x="78.99" y="207.73" width="17.45" height="7.29" fill="#fff"/>
<rect x="98.09" y="207.73" width="14.05" height="7.29" fill="#fff"/>
<rect x="113.79" y="207.73" width="17.05" height="7.29" fill="#fff"/>
<rect x="132.49" y="207.73" width="14.10" height="7.29" fill="#fff"/>
<rect x="148.24" y="207.73" width="16.75" height="7.29" fill="#fff"/>
<rect x="1.65" y="216.67" width="12.39" height="7.29" fill="#fff"/>
<rect x="15.69" y="216.67" width="12.15" height="7.29" fill="#fff"/>
<rect x="29.49" y="216.67" width="13.85" height="7.29" fill="#fff"/>
<rect x="44.99" y="216.67" width="17.15" height="7.29" fill="#fff"/>
<rect x="63.79" y="216.67" width="13.55" height="7.29" fill="#fff"/>
<rect x="78.99" y="216.67" width="17.45" height="7.29" fill="#fff"/>
<rect x="98.09" y="216.67" width="14.05" height="7.29" fill="#fff"/>
<rect x="113.79" y="216.67" width="17.05" height="7.29" fill="#fff"/>
<rect x="132.49" y="216.67" width="14.10" height="7.29" fill="#fff"/>
<rect x="148.24" y="216.67" width="16.75" height="7.29" fill="#fff"/>
<rect x="1.65" y="225.61" width="12.39" height="7.29" fill="#fff"/>
<rect x="15.69" y="225.61" width="12.15" height="7.29" fill="#fff"/>
<rect x="29.49" y="225.61" width="13.85" height="7.29" fill="#fff"/>
<rect x="44.99" y="225.61" width="17.15" height="7.29" fill="#fff"/>
<rect x="63.79" y="225.61" width="13.55" height="7.29" fill="#fff"/>
<rect x="78.99" y="225.61" width="17.45" height="7.29" fill="#fff"/>
<rect x="98.09" y="225.61" width="14.05" height="7.29" fill="#fff"/>
<rect x="113.79" y="225.61" width="17.05" height="7.29" fill="#fff"/>
<rect x="132.49" y="225.61" width="14.10" height="7.29" fill="#fff"/>
<rect x="148.24" y="225.61" width="16.75" height="7.29" fill="#fff"/>
<rect x="1.65" y="234.55" width="12.39" height="7.29" fill="#fff"/>
<rect x="15.69" y="234.55" width="12.15" height="7.29" fill="#fff"/>
<rect x="29.49" y="234.55" width="13.85" height="7.29" fill="#fff"/>
<rect x="44.99" y="234.55" width="17.15" height="7.29" fill="#fff"/>
<rect x="63.79" y="234.55" width="13.55" height="7.29" fill="#fff"/>
<rect x="78.99" y="234.55" width="17.45" height="7.29" fill="#fff"/>
<rect x="98.09" y="234.55" width="14.05" height="7.29" fill="#fff"/>
<rect x="113.79" y="234.55" width="17.05" height="7.29" fill="#fff"/>
<rect x="132.49" y="234.55" width="14.10" height="7.29" fill="#fff"/>
<rect x="148.24" y="234.55" width="16.75" height="7.29" fill="#fff"/>
<rect x="1.65" y="243.49" width="12.39" height="7.29" fill="#fff"/>
<rect x="15.69" y="243.49" width="12.15" height="7.29" fill="#fff"/>
<rect x="29.49" y="243.49" width="13.85" height="7.29" fill="#fff"/>
<rect x="44.99" y="243.49" width="17.15" height="7.29" fill="#fff"/>
<rect x="63.79" y="243.49" width="13.55" height="7.29" fill="#fff"/>
<rect x="78.99" y="243.49" width="17.45" height="7.29" fill="#fff"/>
<rect x="98.09" y="243.49" width="14.05" height="7.29" fill="#fff"/>
<rect x="113.79" y="243.49" width="17.05" height="7.29" fill="#fff"/>
<rect x="132.49" y="243.49" width="14.10" height="7.29" fill="#fff"/>
<rect x="148.24" y="243.49" width="16.75" height="7.29" fill="#fff"/>
<rect x="1.65" y="252.43" width="12.39" height="7.29" fill="#fff"/>
<rect x="15.69" y="252.43" width="12.15" height="7.29" fill="#fff"/>
<rect x="29.49" y="252.43" width="13.85" height="7.29" fill="#fff"/>
<rect x="44.99" y="252.43" width="17.15" height="7.29" fill="#fff"/>
<rect x="63.79" y="252.43" width="13.55" height="7.29" fill="#fff"/>
<rect x="78.99" y="252.43" width="17.45" height="7.29" fill="#fff"/>
<rect x="98.09" y="252.43" width="14.05" height="7.29" fill="#fff"/>
<rect x="113.79" y="252.43" width="17.05" height="7.29" fill="#fff"/>
<rect x="132.49" y="252.43" width="14.10" height="7.29" fill="#fff"/>
<rect x="148.24" y="252.43" width="16.75" height="7.29" fill="#fff"/>
<rect x="1.65" y="261.37" width="12.39" height="7.29" fill="#fff"/>
<rect x="15.69" y="261.37" width="12.15" height="7.29" fill="#fff"/>
<rect x="29.49" y="261.37" width="13.85" height="7.29" fill="#fff"/>
<rect x="44.99" y="261.37" width="17.15" height="7.29" fill="#fff"/>
<rect x="63.79" y="261.37" width="13.55" height="7.29" fill="#fff"/>
<rect x="78.99" y="261.37" width="17.45" height="7.29" fill="#fff"/>
<rect x="98.09" y="261.37" width="14.05" height="7.29" fill="#fff"/>
<rect x="113.79" y="261.37" width="17.05" height="7.29" fill="#fff"/>
<rect x="132.49" y="261.37" width="14.10" height="7.29" fill="#fff"/>
<rect x="148.24" y="261.37" width="16.75" height="7.29" fill="#fff"/>
<rect x="1.65" y="270.31" width="12.39" height="7.29" fill="#fff"/>
<rect x="15.69" y="270.31" width="12.15" height="7.29" fill="#fff"/>
<rect x="29.49" y="270.31" width="13.85" height="7.29" fill="#fff"/>
<rect x="44.99" y="270.31" width="17.15" height="7.29" fill="#fff"/>
<rect x="63.79" y="270.31" width="13.55" height="7.29" fill="#fff"/>
<rect x="78.99" y="270.31" width="17.45" height="7.29" fill="#fff"/>
<rect x="98.09" y="270.31" width="14.05" height="7.29" fill="#fff"/>
<rect x="113.79" y="270.31" width="17.05" height="7.29" fill="#fff"/>
<rect x="132.49" y="270.31" width="14.10" height="7.29" fill="#fff"/>
<rect x="148.24" y="270.31" width="16.75" height="7.29" fill="#fff"/>
<rect x="1.65" y="279.25" width="12.39" height="7.29" fill="#fff"/>
<rect x="15.69" y="279.25" width="12.15" height="7.29" fill="#fff"/>
<rect x="29.49" y="279.25" width="13.85" height="7.29" fill="#fff"/>
<rect x="44.99" y="279.25" width="17.15" height="7.29" fill="#fff"/>
<rect x="63.79" y="279.25" width="13.55" height="7.29" fill="#fff"/>
<rect x="78.99" y="279.25" width="17.45" height="7.29" fill="#fff"/>
<rect x="98.09" y="279.25" width="14.05" height="7.29" fill="#fff"/>
<rect x="113.79" y="279.25" width="17.05" height="7.29" fill="#fff"/>
<rect x="132.49" y="279.25" width="14.10" height="7.29" fill="#fff"/>
<rect x="148.24" y="279.25" width="16.75" height="7.29" fill="#fff"/>
</svg>
<div class="tc th" style="left:2.86px;top:49.20px;width:14.04px;height:9.40px;line-height:10.90px">Date</div>
<div class="tc th" style="left:16.90px;top:49.20px;width:13.80px;height:9.40px;line-height:10.90px">Day</div>
<div class="tc th" style="left:30.70px;top:49.20px;width:15.50px;height:9.40px;line-height:10.90px">Time</div>
<div class="tc th" style="left:46.20px;top:49.20px;width:18.80px;height:9.40px;line-height:10.90px">Height</div>
<div class="tc th" style="left:65.00px;top:49.20px;width:15.20px;height:9.40px;line-height:10.90px">Time</div>
<div class="tc th" style="left:80.20px;top:49.20px;width:19.10px;height:9.40px;line-height:10.90px">Height</div>
<div class="tc th" style="left:99.30px;top:49.20px;width:15.70px;height:9.40px;line-height:10.90px">Time</div>
<div class="tc th" style="left:115.00px;top:49.20px;width:18.70px;height:9.40px;line-height:10.90px">Height</div>
<div class="tc th" style="left:133.70px;top:49.20px;width:15.75px;height:9.40px;line-height:10.90px">Time</div>
<div class="tc th" style="left:149.45px;top:49.20px;width:18.40px;height:9.40px;line-height:10.90px">Height</div>
<div class="tc td0" style="left:2.86px;top:58.60px;width:14.04px;height:8.94px;line-height:10.44px">1</div>
<div class="tc td1" style="left:16.90px;top:58.60px;width:13.80px;height:8.94px;line-height:10.44px">Mon</div>
<div class="tc" style="left:30.70px;top:58.60px;width:15.50px;height:8.94px;line-height:10.44px">05:37</div>
<div class="tc" style="left:46.20px;top:58.60px;width:18.80px;height:8.94px;line-height:10.44px">2.9</div>
<div class="tc" style="left:65.00px;top:58.60px;width:15.20px;height:8.94px;line-height:10.44px">11:47</div>
<div class="tc" style="left:80.20px;top:58.60px;width:19.10px;height:8.94px;line-height:10.44px">1.33</div>
<div class="tc" style="left:99.30px;top:58.60px;width:15.70px;height:8.94px;line-height:10.44px">17:57</div>
<div class="tc" style="left:115.00px;top:58.60px;width:18.70px;height:8.94px;line-height:10.44px">2.85</div>
<div class="tc td0" style="left:2.86px;top:67.54px;width:14.04px;height:8.94px;line-height:10.44px">2</div>
<div class="tc td1" style="left:16.90px;top:67.54px;width:13.80px;height:8.94px;line-height:10.44px">Tue</div>
<div class="tc" style="left:30.70px;top:67.54px;width:15.50px;height:8.94px;line-height:10.44px">00:07</div>
<div class="tc" style="left:46.20px;top:67.54px;width:18.80px;height:8.94px;line-height:10.44px">1.37</div>
<div class="tc" style="left:65.00px;top:67.54px;width:15.20px;height:8.94px;line-height:10.44px">06:17</div>
<div class="tc" style="left:80.20px;top:67.54px;width:19.10px;height:8.94px;line-height:10.44px">2.8</div>
<div class="tc" style="left:99.30px;top:67.54px;width:15.70px;height:8.94px;line-height:10.44px">12:28</div>
<div class="tc" style="left:115.00px;top:67.54px;width:18.70px;height:8.94px;line-height:10.44px">1.42</div>
<div class="tc" style="left:133.70px;top:67.54px;width:15.75px;height:8.94px;line-height:10.44px">18:39</div>
<div class="tc" style="left:149.45px;top:67.54px;width:18.40px;height:8.94px;line-height:10.44px">2.76</div>
<div class="tc td0" style="left:2.86px;top:76.48px;width:14.04px;height:8.94px;line-height:10.44px">3</div>
<div class="tc td1" style="left:16.90px;top:76.48px;width:13.80px;height:8.94px;line-height:10.44px">Wed</div>
<div class="tc" style="left:30.70px;top:76.48px;width:15.50px;height:8.94px;line-height:10.44px">00:50</div>
<div class="tc" style="left:46.20px;top:76.48px;width:18.80px;height:8.94px;line-height:10.44px">1.46</div>
<div class="tc" style="left:65.00px;top:76.48px;width:15.20px;height:8.94px;line-height:10.44px">07:02</div>
<div class="tc" style="left:80.20px;top:76.48px;width:19.10px;height:8.94px;line-height:10.44px">2.72</div>
<div class="tc" style="left:99.30px;top:76.48px;width:15.70px;height:8.94px;line-height:10.44px">13:15</div>
<div class="tc" style="left:115.00px;top:76.48px;width:18.70px;height:8.94px;line-height:10.44px">1.49</div>
<div class="tc" style="left:133.70px;top:76.48px;width:15.75px;height:8.94px;line-height:10.44px">19:28</div>
<div class="tc" style="left:149.45px;top:76.48px;width:18.40px;height:8.94px;line-height:10.44px">2.69</div>
<div class="tc td0" style="left:2.86px;top:85.42px;width:14.04px;height:8.94px;line-height:10.44px">4</div>
<div class="tc td1" style="left:16.90px;top:85.42px;width:13.80px;height:8.94px;line-height:10.44px">Thu</div>
<div class="tc" style="left:30.70px;top:85.42px;width:15.50px;height:8.94px;line-height:10.44px">01:42</div>
<div class="tc" style="left:46.20px;top:85.42px;width:18.80px;height:8.94px;line-height:10.44px">1.52</div>
<div class="tc" style="left:65.00px;top:85.42px;width:15.20px;height:8.94px;line-height:10.44px">07:56</div>
<div class="tc" style="left:80.20px;top:85.42px;width:19.10px;height:8.94px;line-height:10.44px">2.67</div>
<div class="tc" style="left:99.30px;top:85.42px;width:15.70px;height:8.94px;line-height:10.44px">14:11</div>
<div class="tc" style="left:115.00px;top:85.42px;width:18.70px;height:8.94px;line-height:10.44px">1.54</div>
<div class="tc" style="left:133.70px;top:85.42px;width:15.75px;height:8.94px;line-height:10.44px">20:27</div>
<div class="tc" style="left:149.45px;top:85.42px;width:18.40px;height:8.94px;line-height:10.44px">2.65</div>
<div class="tc td0" style="left:2.86px;top:94.36px;width:14.04px;height:8.94px;line-height:10.44px">5</div>
<div class="tc td1" style="left:16.90px;top:94.36px;width:13.80px;height:8.94px;line-height:10.44px">Fri</div>
<div class="tc" style="left:30.70px;top:94.36px;width:15.50px;height:8.94px;line-height:10.44px">02:43</div>
<div class="tc" style="left:46.20px;top:94.36px;width:18.80px;height:8.94px;line-height:10.44px">1.55</div>
<div class="tc" style="left:65.00px;top:94.36px;width:15.20px;height:8.94px;line-height:10.44px">08:59</div>
<div class="tc" style="left:80.20px;top:94.36px;width:19.10px;height:8.94px;line-height:10.44px">2.65</div>
<div class="tc" style="left:99.30px;top:94.36px;width:15.70px;height:8.94px;line-height:10.44px">15:16</div>
<div class="tc" style="left:115.00px;top:94.36px;width:18.70px;height:8.94px;line-height:10.44px">1.55</div>
<div class="tc" style="left:133.70px;top:94.36px;width:15.75px;height:8.94px;line-height:10.44px">21:33</div>
<div class="tc" style="left:149.45px;top:94.36px;width:18.40px;height:8.94px;line-height:10.44px">2.66</div>
<div class="tc td0" style="left:2.86px;top:103.30px;width:14.04px;height:8.94px;line-height:10.44px">6</div>
<div class="tc td1" style="left:16.90px;top:103.30px;width:13.80px;height:8.94px;line-height:10.44px">Sat</div>
<div class="tc" style="left:30.70px;top:103.30px;width:15.50px;height:8.94px;line-height:10.44px">03:50</div>
<div class="tc" style="left:46.20px;top:103.30px;width:18.80px;height:8.94px;line-height:10.44px">1.53</div>
<div class="tc" style="left:65.00px;top:103.30px;width:15.20px;height:8.94px;line-height:10.44px">10:06</div>
<div class="tc" style="left:80.20px;top:103.30px;width:19.10px;height:8.94px;line-height:10.44px">2.69</div>
<div class="tc" style="left:99.30px;top:103.30px;width:15.70px;height:8.94px;line-height:10.44px">16:23</div>
<div class="tc" style="left:115.00px;top:103.30px;width:18.70px;height:8.94px;line-height:10.44px">1.49</div>
<div class="tc" style="left:133.70px;top:103.30px;width:15.75px;height:8.94px;line-height:10.44px">22:38</div>
<div class="tc" style="left:149.45px;top:103.30px;width:18.40px;height:8.94px;line-height:10.44px">2.73</div>
<div class="tc td0" style="left:2.86px;top:112.24px;width:14.04px;height:8.94px;line-height:10.44px">7</div>
<div class="tc td1" style="left:16.90px;top:112.24px;width:13.80px;height:8.94px;line-height:10.44px">Sun</div>
<div class="tc" style="left:30.70px;top:112.24px;width:15.50px;height:8.94px;line-height:10.44px">04:54</div>
<div class="tc" style="left:46.20px;top:112.24px;width:18.80px;height:8.94px;line-height:10.44px">1.44</div>
<div class="tc" style="left:65.00px;top:112.24px;width:15.20px;height:8.94px;line-height:10.44px">11:09</div>
<div class="tc" style="left:80.20px;top:112.24px;width:19.10px;height:8.94px;line-height:10.44px">2.79</div>
<div class="tc" style="left:99.30px;top:112.24px;width:15.70px;height:8.94px;line-height:10.44px">17:24</div>
<div class="tc" style="left:115.00px;top:112.24px;width:18.70px;height:8.94px;line-height:10.44px">1.38</div>
<div class="tc" style="left:133.70px;top:112.24px;width:15.75px;height:8.94px;line-height:10.44px">23:38</div>
<div class="tc" style="left:149.45px;top:112.24px;width:18.40px;height:8.94px;line-height:10.44px">2.85</div>
<div class="tc td0" style="left:2.86px;top:121.18px;width:14.04px;height:8.94px;line-height:10.44px">8</div>
<div class="tc td1" style="left:16.90px;top:121.18px;width:13.80px;height:8.94px;line-height:10.44px">Mon</div>
<div class="tc" style="left:30.70px;top:121.18px;width:15.50px;height:8.94px;line-height:10.44px">05:51</div>
<div class="tc" style="left:46.20px;top:121.18px;width:18.80px;height:8.94px;line-height:10.44px">1.31</div>
<div class="tc" style="left:65.00px;top:121.18px;width:15.20px;height:8.94px;line-height:10.44px">12:05</div>
<div class="tc" style="left:80.20px;top:121.18px;width:19.10px;height:8.94px;line-height:10.44px">2.93</div>
<div class="tc" style="left:99.30px;top:121.18px;width:15.70px;height:8.94px;line-height:10.44px">18:18</div>
<div class="tc" style="left:115.00px;top:121.18px;width:18.70px;height:8.94px;line-height:10.44px">1.24</div>
<div class="tc td0" style="left:2.86px;top:130.12px;width:14.04px;height:8.94px;line-height:10.44px">9</div>
<div class="tc td1" style="left:16.90px;top:130.12px;width:13.80px;height:8.94px;line-height:10.44px">Tue</div>
<div class="tc" style="left:30.70px;top:130.12px;width:15.50px;height:8.94px;line-height:10.44px">00:30</div>
<div class="tc" style="left:46.20px;top:130.12px;width:18.80px;height:8.94px;line-height:10.44px">3</div>
<div class="tc" style="left:65.00px;top:130.12px;width:15.20px;height:8.94px;line-height:10.44px">06:42</div>
<div class="tc" style="left:80.20px;top:130.12px;width:19.10px;height:8.94px;line-height:10.44px">1.16</div>
<div class="tc" style="left:99.30px;top:130.12px;width:15.70px;height:8.94px;line-height:10.44px">12:55</div>
<div class="tc" style="left:115.00px;top:130.12px;width:18.70px;height:8.94px;line-height:10.44px">3.08</div>
<div class="tc" style="left:133.70px;top:130.12px;width:15.75px;height:8.94px;line-height:10.44px">19:06</div>
<div class="tc" style="left:149.45px;top:130.12px;width:18.40px;height:8.94px;line-height:10.44px">1.08</div>
<div class="tc td0" style="left:2.86px;top:139.06px;width:14.04px;height:8.94px;line-height:10.44px">10</div>
<div class="tc td1" style="left:16.90px;top:139.06px;width:13.80px;height:8.94px;line-height:10.44px">Wed</div>
<div class="tc" style="left:30.70px;top:139.06px;width:15.50px;height:8.94px;line-height:10.44px">01:18</div>
<div class="tc" style="left:46.20px;top:139.06px;width:18.80px;height:8.94px;line-height:10.44px">3.16</div>
<div class="tc" style="left:65.00px;top:139.06px;width:15.20px;height:8.94px;line-height:10.44px">07:30</div>
<div class="tc" style="left:80.20px;top:139.06px;width:19.10px;height:8.94px;line-height:10.44px">1.01</div>
<div class="tc" style="left:99.30px;top:139.06px;width:15.70px;height:8.94px;line-height:10.44px">13:41</div>
<div class="tc" style="left:115.00px;top:139.06px;width:18.70px;height:8.94px;line-height:10.44px">3.23</div>
<div class="tc" style="left:133.70px;top:139.06px;width:15.75px;height:8.94px;line-height:10.44px">19:52</div>
<div class="tc" style="left:149.45px;top:139.06px;width:18.40px;height:8.94px;line-height:10.44px">0.94</div>
<div class="tc td0" style="left:2.86px;top:148.00px;width:14.04px;height:8.94px;line-height:10.44px">11</div>
<div class="tc td1" style="left:16.90px;top:148.00px;width:13.80px;height:8.94px;line-height:10.44px">Thu</div>
<div class="tc" style="left:30.70px;top:148.00px;width:15.50px;height:8.94px;line-height:10.44px">02:03</div>
<div class="tc" style="left:46.20px;top:148.00px;width:18.80px;height:8.94px;line-height:10.44px">3.3</div>
<div class="tc" style="left:65.00px;top:148.00px;width:15.20px;height:8.94px;line-height:10.44px">08:14</div>
<div class="tc" style="left:80.20px;top:148.00px;width:19.10px;height:8.94px;line-height:10.44px">0.87</div>
<div class="tc" style="left:99.30px;top:148.00px;width:15.70px;height:8.94px;line-height:10.44px">14:25</div>
<div class="tc" style="left:115.00px;top:148.00px;width:18.70px;height:8.94px;line-height:10.44px">3.35</div>
<div class="tc" style="left:133.70px;top:148.00px;width:15.75px;height:8.94px;line-height:10.44px">20:36</div>
<div class="tc" style="left:149.45px;top:148.00px;width:18.40px;height:8.94px;line-height:10.44px">0.82</div>
<div class="tc td0" style="left:2.86px;top:156.94px;width:14.04px;height:8.94px;line-height:10.44px">12</div>
<div class="tc td1" style="left:16.90px;top:156.94px;width:13.80px;height:8.94px;line-height:10.44px">Fri</div>
<div class="tc" style="left:30.70px;top:156.94px;width:15.50px;height:8.94px;line-height:10.44px">02:47</div>
<div class="tc" style="left:46.20px;top:156.94px;width:18.80px;height:8.94px;line-height:10.44px">3.4</div>
<div class="tc" style="left:65.00px;top:156.94px;width:15.20px;height:8.94px;line-height:10.44px">08:58</div>
<div class="tc" style="left:80.20px;top:156.94px;width:19.10px;height:8.94px;line-height:10.44px">0.78</div>
<div class="tc" style="left:99.30px;top:156.94px;width:15.70px;height:8.94px;line-height:10.44px">15:09</div>
<div class="tc" style="left:115.00px;top:156.94px;width:18.70px;height:8.94px;line-height:10.44px">3.44</div>
<div class="tc" style="left:133.70px;top:156.94px;width:15.75px;height:8.94px;line-height:10.44px">21:20</div>
<div class="tc" style="left:149.45px;top:156.94px;width:18.40px;height:8.94px;line-height:10.44px">0.75</div>
<div class="tc td0" style="left:2.86px;top:165.88px;width:14.04px;height:8.94px;line-height:10.44px">13</div>
<div class="tc td1" style="left:16.90px;top:165.88px;width:13.80px;height:8.94px;line-height:10.44px">Sat</div>
<div class="tc" style="left:30.70px;top:165.88px;width:15.50px;height:8.94px;line-height:10.44px">03:30</div>
<div class="tc" style="left:46.20px;top:165.88px;width:18.80px;height:8.94px;line-height:10.44px">3.46</div>
<div class="tc" style="left:65.00px;top:165.88px;width:15.20px;height:8.94px;line-height:10.44px">09:41</div>
<div class="tc" style="left:80.20px;top:165.88px;width:19.10px;height:8.94px;line-height:10.44px">0.73</div>
<div class="tc" style="left:99.30px;top:165.88px;width:15.70px;height:8.94px;line-height:10.44px">15:52</div>
<div class="tc" style="left:115.00px;top:165.88px;width:18.70px;height:8.94px;line-height:10.44px">3.47</div>
<div class="tc" style="left:133.70px;top:165.88px;width:15.75px;height:8.94px;line-height:10.44px">22:03</div>
<div class="tc" style="left:149.45px;top:165.88px;width:18.40px;height:8.94px;line-height:10.44px">0.73</div>
<div class="tc td0" style="left:2.86px;top:174.82px;width:14.04px;height:8.94px;line-height:10.44px">14</div>
<div class="tc td1" style="left:16.90px;top:174.82px;width:13.80px;height:8.94px;line-height:10.44px">Sun</div>
<div class="tc" style="left:30.70px;top:174.82px;width:15.50px;height:8.94px;line-height:10.44px">04:14</div>
<div class="tc" style="left:46.20px;top:174.82px;width:18.80px;height:8.94px;line-height:10.44px">3.47</div>
<div class="tc" style="left:65.00px;top:174.82px;width:15.20px;height:8.94px;line-height:10.44px">10:25</div>
<div class="tc" style="left:80.20px;top:174.82px;width:19.10px;height:8.94px;line-height:10.44px">0.73</div>
<div class="tc" style="left:99.30px;top:174.82px;width:15.70px;height:8.94px;line-height:10.44px">16:37</div>
<div class="tc" style="left:115.00px;top:174.82px;width:18.70px;height:8.94px;line-height:10.44px">3.46</div>
<div class="tc" style="left:133.70px;top:174.82px;width:15.75px;height:8.94px;line-height:10.44px">22:48</div>
<div class="tc" style="left:149.45px;top:174.82px;width:18.40px;height:8.94px;line-height:10.44px">0.76</div>
<div class="tc td0" style="left:2.86px;top:183.76px;width:14.04px;height:8.94px;line-height:10.44px">15</div>
<div class="tc td1" style="left:16.90px;top:183.76px;width:13.80px;height:8.94px;line-height:10.44px">Mon</div>
<div class="tc" style="left:30.70px;top:183.76px;width:15.50px;height:8.94px;line-height:10.44px">04:59</div>
<div class="tc" style="left:46.20px;top:183.76px;width:18.80px;height:8.94px;line-height:10.44px">3.43</div>
<div class="tc" style="left:65.00px;top:183.76px;width:15.20px;height:8.94px;line-height:10.44px">11:11</div>
<div class="tc" style="left:80.20px;top:183.76px;width:19.10px;height:8.94px;line-height:10.44px">0.79</div>
<div class="tc" style="left:99.30px;top:183.76px;width:15.70px;height:8.94px;line-height:10.44px">17:23</div>
<div class="tc" style="left:115.00px;top:183.76px;width:18.70px;height:8.94px;line-height:10.44px">3.38</div>
<div class="tc" style="left:133.70px;top:183.76px;width:15.75px;height:8.94px;line-height:10.44px">23:35</div>
<div class="tc" style="left:149.45px;top:183.76px;width:18.40px;height:8.94px;line-height:10.44px">0.84</div>
<div class="tc td0" style="left:2.86px;top:192.70px;width:14.04px;height:8.94px;line-height:10.44px">16</div>
<div class="tc td1" style="left:16.90px;top:192.70px;width:13.80px;height:8.94px;line-height:10.44px">Tue</div>
<div class="tc" style="left:30.70px;top:192.70px;width:15.50px;height:8.94px;line-height:10.44px">05:47</div>
<div class="tc" style="left:46.20px;top:192.70px;width:18.80px;height:8.94px;line-height:10.44px">3.33</div>
<div class="tc" style="left:65.00px;top:192.70px;width:15.20px;height:8.94px;line-height:10.44px">12:00</div>
<div class="tc" style="left:80.20px;top:192.70px;width:19.10px;height:8.94px;line-height:10.44px">0.9</div>
<div class="tc" style="left:99.30px;top:192.70px;width:15.70px;height:8.94px;line-height:10.44px">18:12</div>
<div class="tc" style="left:115.00px;top:192.70px;width:18.70px;height:8.94px;line-height:10.44px">3.27</div>
<div class="tc td0" style="left:2.86px;top:201.64px;width:14.04px;height:8.94px;line-height:10.44px">17</div>
<div class="tc td1" style="left:16.90px;top:201.64px;width:13.80px;height:8.94px;line-height:10.44px">Wed</div>
<div class="tc" style="left:30.70px;top:201.64px;width:15.50px;height:8.94px;line-height:10.44px">00:25</div>
<div class="tc" style="left:46.20px;top:201.64px;width:18.80px;height:8.94px;line-height:10.44px">0.97</div>
<div class="tc" style="left:65.00px;top:201.64px;width:15.20px;height:8.94px;line-height:10.44px">06:39</div>
<div class="tc" style="left:80.20px;top:201.64px;width:19.10px;height:8.94px;line-height:10.44px">3.2</div>
<div class="tc" style="left:99.30px;top:201.64px;width:15.70px;height:8.94px;line-height:10.44px">12:53</div>
<div class="tc" style="left:115.00px;top:201.64px;width:18.70px;height:8.94px;line-height:10.44px">1.04</div>
<div class="tc" style="left:133.70px;top:201.64px;width:15.75px;height:8.94px;line-height:10.44px">19:07</div>
<div class="tc" style="left:149.45px;top:201.64px;width:18.40px;height:8.94px;line-height:10.44px">3.12</div>
<div class="tc td0" style="left:2.86px;top:210.58px;width:14.04px;height:8.94px;line-height:10.44px">18</div>
<div class="tc td1" style="left:16.90px;top:210.58px;width:13.80px;height:8.94px;line-height:10.44px">Thu</div>
<div class="tc" style="left:30.70px;top:210.58px;width:15.50px;height:8.94px;line-height:10.44px">01:22</div>
<div class="tc" style="left:46.20px;top:210.58px;width:18.80px;height:8.94px;line-height:10.44px">1.11</div>
<div class="tc" style="left:65.00px;top:210.58px;width:15.20px;height:8.94px;line-height:10.44px">07:38</div>
<div class="tc" style="left:80.20px;top:210.58px;width:19.10px;height:8.94px;line-height:10.44px">3.05</div>
<div class="tc" style="left:99.30px;top:210.58px;width:15.70px;height:8.94px;line-height:10.44px">13:54</div>
<div class="tc" style="left:115.00px;top:210.58px;width:18.70px;height:8.94px;line-height:10.44px">1.18</div>
<div class="tc" style="left:133.70px;top:210.58px;width:15.75px;height:8.94px;line-height:10.44px">20:10</div>
<div class="tc" style="left:149.45px;top:210.58px;width:18.40px;height:8.94px;line-height:10.44px">2.99</div>
<div class="tc td0" style="left:2.86px;top:219.52px;width:14.04px;height:8.94px;line-height:10.44px">19</div>
<div class="tc td1" style="left:16.90px;top:219.52px;width:13.80px;height:8.94px;line-height:10.44px">Fri</div>
<div class="tc" style="left:30.70px;top:219.52px;width:15.50px;height:8.94px;line-height:10.44px">02:27</div>
<div class="tc" style="left:46.20px;top:219.52px;width:18.80px;height:8.94px;line-height:10.44px">1.24</div>
<div class="tc" style="left:65.00px;top:219.52px;width:15.20px;height:8.94px;line-height:10.44px">08:45</div>
<div class="tc" style="left:80.20px;top:219.52px;width:19.10px;height:8.94px;line-height:10.44px">2.94</div>
<div class="tc" style="left:99.30px;top:219.52px;width:15.70px;height:8.94px;line-height:10.44px">15:04</div>
<div class="tc" style="left:115.00px;top:219.52px;width:18.70px;height:8.94px;line-height:10.44px">1.28</div>
<div class="tc" style="left:133.70px;top:219.52px;width:15.75px;height:8.94px;line-height:10.44px">21:22</div>
<div class="tc" style="left:149.45px;top:219.52px;width:18.40px;height:8.94px;line-height:10.44px">2.9</div>
<div class="tc td0" style="left:2.86px;top:228.46px;width:14.04px;height:8.94px;line-height:10.44px">20</div>
<div class="tc td1" style="left:16.90px;top:228.46px;width:13.80px;height:8.94px;line-height:10.44px">Sat</div>
<div class="tc" style="left:30.70px;top:228.46px;width:15.50px;height:8.94px;line-height:10.44px">03:42</div>
<div class="tc" style="left:46.20px;top:228.46px;width:18.80px;height:8.94px;line-height:10.44px">1.31</div>
<div class="tc" style="left:65.00px;top:228.46px;width:15.20px;height:8.94px;line-height:10.44px">10:01</div>
<div class="tc" style="left:80.20px;top:228.46px;width:19.10px;height:8.94px;line-height:10.44px">2.88</div>
<div class="tc" style="left:99.30px;top:228.46px;width:15.70px;height:8.94px;line-height:10.44px">16:20</div>
<div class="tc" style="left:115.00px;top:228.46px;width:18.70px;height:8.94px;line-height:10.44px">1.32</div>
<div class="tc" style="left:133.70px;top:228.46px;width:15.75px;height:8.94px;line-height:10.44px">22:39</div>
<div class="tc" style="left:149.45px;top:228.46px;width:18.40px;height:8.94px;line-height:10.44px">2.89</div>
<div class="tc td0" style="left:2.86px;top:237.40px;width:14.04px;height:8.94px;line-height:10.44px">21</div>
<div class="tc td1" style="left:16.90px;top:237.40px;width:13.80px;height:8.94px;line-height:10.44px">Sun</div>
<div class="tc" style="left:30.70px;top:237.40px;width:15.50px;height:8.94px;line-height:10.44px">04:57</div>
<div class="tc" style="left:46.20px;top:237.40px;width:18.80px;height:8.94px;line-height:10.44px">1.3</div>
<div class="tc" style="left:65.00px;top:237.40px;width:15.20px;height:8.94px;line-height:10.44px">11:15</div>
<div class="tc" style="left:80.20px;top:237.40px;width:19.10px;height:8.94px;line-height:10.44px">2.91</div>
<div class="tc" style="left:99.30px;top:237.40px;width:15.70px;height:8.94px;line-height:10.44px">17:32</div>
<div class="tc" style="left:115.00px;top:237.40px;width:18.70px;height:8.94px;line-height:10.44px">1.27</div>
<div class="tc" style="left:133.70px;top:237.40px;width:15.75px;height:8.94px;line-height:10.44px">23:48</div>
<div class="tc" style="left:149.45px;top:237.40px;width:18.40px;height:8.94px;line-height:10.44px">2.95</div>
<div class="tc td0" style="left:2.86px;top:246.34px;width:14.04px;height:8.94px;line-height:10.44px">22</div>
<div class="tc td1" style="left:16.90px;top:246.34px;width:13.80px;height:8.94px;line-height:10.44px">Mon</div>
<div class="tc" style="left:30.70px;top:246.34px;width:15.50px;height:8.94px;line-height:10.44px">06:04</div>
<div class="tc" style="left:46.20px;top:246.34px;width:18.80px;height:8.94px;line-height:10.44px">1.23</div>
<div class="tc" style="left:65.00px;top:246.34px;width:15.20px;height:8.94px;line-height:10.44px">12:19</div>
<div class="tc" style="left:80.20px;top:246.34px;width:19.10px;height:8.94px;line-height:10.44px">2.99</div>
<div class="tc" style="left:99.30px;top:246.34px;width:15.70px;height:8.94px;line-height:10.44px">18:33</div>
<div class="tc" style="left:115.00px;top:246.34px;width:18.70px;height:8.94px;line-height:10.44px">1.19</div>
<div class="tc td0" style="left:2.86px;top:255.28px;width:14.04px;height:8.94px;line-height:10.44px">23</div>
<div class="tc td1" style="left:16.90px;top:255.28px;width:13.80px;height:8.94px;line-height:10.44px">Tue</div>
<div class="tc" style="left:30.70px;top:255.28px;width:15.50px;height:8.94px;line-height:10.44px">00:47</div>
<div class="tc" style="left:46.20px;top:255.28px;width:18.80px;height:8.94px;line-height:10.44px">3.04</div>
<div class="tc" style="left:65.00px;top:255.28px;width:15.20px;height:8.94px;line-height:10.44px">07:00</div>
<div class="tc" style="left:80.20px;top:255.28px;width:19.10px;height:8.94px;line-height:10.44px">1.14</div>
<div class="tc" style="left:99.30px;top:255.28px;width:15.70px;height:8.94px;line-height:10.44px">13:12</div>
<div class="tc" style="left:115.00px;top:255.28px;width:18.70px;height:8.94px;line-height:10.44px">3.08</div>
<div class="tc" style="left:133.70px;top:255.28px;width:15.75px;height:8.94px;line-height:10.44px">19:24</div>
<div class="tc" style="left:149.45px;top:255.28px;width:18.40px;height:8.94px;line-height:10.44px">1.09</div>
<div class="tc td0" style="left:2.86px;top:264.22px;width:14.04px;height:8.94px;line-height:10.44px">24</div>
<div class="tc td1" style="left:16.90px;top:264.22px;width:13.80px;height:8.94px;line-height:10.44px">Wed</div>
<div class="tc" style="left:30.70px;top:264.22px;width:15.50px;height:8.94px;line-height:10.44px">01:36</div>
<div class="tc" style="left:46.20px;top:264.22px;width:18.80px;height:8.94px;line-height:10.44px">3.13</div>
<div class="tc" style="left:65.00px;top:264.22px;width:15.20px;height:8.94px;line-height:10.44px">07:47</div>
<div class="tc" style="left:80.20px;top:264.22px;width:19.10px;height:8.94px;line-height:10.44px">1.06</div>
<div class="tc" style="left:99.30px;top:264.22px;width:15.70px;height:8.94px;line-height:10.44px">13:58</div>
<div class="tc" style="left:115.00px;top:264.22px;width:18.70px;height:8.94px;line-height:10.44px">3.16</div>
<div class="tc" style="left:133.70px;top:264.22px;width:15.75px;height:8.94px;line-height:10.44px">20:08</div>
<div class="tc" style="left:149.45px;top:264.22px;width:18.40px;height:8.94px;line-height:10.44px">1.02</div>
<div class="tc td0" style="left:2.86px;top:273.16px;width:14.04px;height:8.94px;line-height:10.44px">25</div>
<div class="tc td1" style="left:16.90px;top:273.16px;width:13.80px;height:8.94px;line-height:10.44px">Thu</div>
<div class="tc" style="left:30.70px;top:273.16px;width:15.50px;height:8.94px;line-height:10.44px">02:18</div>
<div class="tc" style="left:46.20px;top:273.16px;width:18.80px;height:8.94px;line-height:10.44px">3.19</div>
<div class="tc" style="left:65.00px;top:273.16px;width:15.20px;height:8.94px;line-height:10.44px">08:28</div>
<div class="tc" style="left:80.20px;top:273.16px;width:19.10px;height:8.94px;line-height:10.44px">1</div>
<div class="tc" style="left:99.30px;top:273.16px;width:15.70px;height:8.94px;line-height:10.44px">14:37</div>
<div class="tc" style="left:115.00px;top:273.16px;width:18.70px;height:8.94px;line-height:10.44px">3.21</div>
<div class="tc" style="left:133.70px;top:273.16px;width:15.75px;height:8.94px;line-height:10.44px">20:46</div>
<div class="tc" style="left:149.45px;top:273.16px;width:18.40px;height:8.94px;line-height:10.44px">0.99</div>
<div class="tc td0" style="left:2.86px;top:282.10px;width:14.04px;height:8.94px;line-height:10.44px">26</div>
<div class="tc td1" style="left:16.90px;top:282.10px;width:13.80px;height:8.94px;line-height:10.44px">Fri</div>
<div class="tc" style="left:30.70px;top:282.10px;width:15.50px;height:8.94px;line-height:10.44px">02:55</div>
<div class="tc" style="left:46.20px;top:282.10px;width:18.80px;height:8.94px;line-height:10.44px">3.22</div>
<div class="tc" style="left:65.00px;top:282.10px;width:15.20px;height:8.94px;line-height:10.44px">09:04</div>
<div class="tc" style="left:80.20px;top:282.10px;width:19.10px;height:8.94px;line-height:10.44px">0.98</div>
<div class="tc" style="left:99.30px;top:282.10px;width:15.70px;height:8.94px;line-height:10.44px">15:13</div>
<div class="tc" style="left:115.00px;top:282.10px;width:18.70px;height:8.94px;line-height:10.44px">3.22</div>
<div class="tc" style="left:133.70px;top:282.10px;width:15.75px;height:8.94px;line-height:10.44px">21:21</div>
<div class="tc" style="left:149.45px;top:282.10px;width:18.40px;height:8.94px;line-height:10.44px">0.98</div>
<div class="tc td0" style="left:2.86px;top:291.04px;width:14.04px;height:8.94px;line-height:10.44px">27</div>
<div class="tc td1" style="left:16.90px;top:291.04px;width:13.80px;height:8.94px;line-height:10.44px">Sat</div>
<div class="tc" style="left:30.70px;top:291.04px;width:15.50px;height:8.94px;line-height:10.44px">03:29</div>
<div class="tc" style="left:46.20px;top:291.04px;width:18.80px;height:8.94px;line-height:10.44px">3.22</div>
<div class="tc" style="left:65.00px;top:291.04px;width:15.20px;height:8.94px;line-height:10.44px">09:37</div>
<div class="tc" style="left:80.20px;top:291.04px;width:19.10px;height:8.94px;line-height:10.44px">0.99</div>
<div class="tc" style="left:99.30px;top:291.04px;width:15.70px;height:8.94px;line-height:10.44px">15:45</div>
<div class="tc" style="left:115.00px;top:291.04px;width:18.70px;height:8.94px;line-height:10.44px">3.2</div>
<div class="tc" style="left:133.70px;top:291.04px;width:15.75px;height:8.94px;line-height:10.44px">21:53</div>
<div class="tc" style="left:149.45px;top:291.04px;width:18.40px;height:8.94px;line-height:10.44px">1</div>
<div class="tc td0" style="left:2.86px;top:299.98px;width:14.04px;height:8.94px;line-height:10.44px">28</div>
<div class="tc td1" style="left:16.90px;top:299.98px;width:13.80px;height:8.94px;line-height:10.44px">Sun</div>
<div class="tc" style="left:30.70px;top:299.98px;width:15.50px;height:8.94px;line-height:10.44px">04:00</div>
<div class="tc" style="left:46.20px;top:299.98px;width:18.80px;height:8.94px;line-height:10.44px">3.19</div>
<div class="tc" style="left:65.00px;top:299.98px;width:15.20px;height:8.94px;line-height:10.44px">10:08</div>
<div class="tc" style="left:80.20px;top:299.98px;width:19.10px;height:8.94px;line-height:10.44px">1.03</div>
<div class="tc" style="left:99.30px;top:299.98px;width:15.70px;height:8.94px;line-height:10.44px">16:15</div>
<div class="tc" style="left:115.00px;top:299.98px;width:18.70px;height:8.94px;line-height:10.44px">3.16</div>
<div class="tc" style="left:133.70px;top:299.98px;width:15.75px;height:8.94px;line-height:10.44px">22:23</div>
<div class="tc" style="left:149.45px;top:299.98px;width:18.40px;height:8.94px;line-height:10.44px">1.05</div>
<div class="tc td0" style="left:2.86px;top:308.92px;width:14.04px;height:8.94px;line-height:10.44px">29</div>
<div class="tc td1" style="left:16.90px;top:308.92px;width:13.80px;height:8.94px;line-height:10.44px">Mon</div>
<div class="tc" style="left:30.70px;top:308.92px;width:15.50px;height:8.94px;line-height:10.44px">04:30</div>
<div class="tc" style="left:46.20px;top:308.92px;width:18.80px;height:8.94px;line-height:10.44px">3.13</div>
<div class="tc" style="left:65.00px;top:308.92px;width:15.20px;height:8.94px;line-height:10.44px">10:37</div>
<div class="tc" style="left:80.20px;top:308.92px;width:19.10px;height:8.94px;line-height:10.44px">1.08</div>
<div class="tc" style="left:99.30px;top:308.92px;width:15.70px;height:8.94px;line-height:10.44px">16:45</div>
<div class="tc" style="left:115.00px;top:308.92px;width:18.70px;height:8.94px;line-height:10.44px">3.1</div>
<div class="tc" style="left:133.70px;top:308.92px;width:15.75px;height:8.94px;line-height:10.44px">22:52</div>
<div class="tc" style="left:149.45px;top:308.92px;width:18.40px;height:8.94px;line-height:10.44px">1.12</div>
<div class="tc td0" style="left:2.86px;top:317.86px;width:14.04px;height:8.94px;line-height:10.44px">30</div>
<div class="tc td1" style="left:16.90px;top:317.86px;width:13.80px;height:8.94px;line-height:10.44px">Tue</div>
<div class="tc" style="left:30.70px;top:317.86px;width:15.50px;height:8.94px;line-height:10.44px">05:00</div>
<div class="tc" style="left:46.20px;top:317.86px;width:18.80px;height:8.94px;line-height:10.44px">3.06</div>
<div class="tc" style="left:65.00px;top:317.86px;width:15.20px;height:8.94px;line-height:10.44px">11:08</div>
<div class="tc" style="left:80.20px;top:317.86px;width:19.10px;height:8.94px;line-height:10.44px">1.16</div>
<div class="tc" style="left:99.30px;top:317.86px;width:15.70px;height:8.94px;line-height:10.44px">17:16</div>
<div class="tc" style="left:115.00px;top:317.86px;width:18.70px;height:8.94px;line-height:10.44px">3.02</div>
<div class="tc" style="left:133.70px;top:317.86px;width:15.75px;height:8.94px;line-height:10.44px">23:24</div>
<div class="tc" style="left:149.45px;top:317.86px;width:18.40px;height:8.94px;line-height:10.44px">1.2</div>
<div class="tc td0" style="left:2.86px;top:326.80px;width:14.04px;height:8.94px;line-height:10.44px">31</div>
<div class="tc td1" style="left:16.90px;top:326.80px;width:13.80px;height:8.94px;line-height:10.44px">Wed</div>
<div class="tc" style="left:30.70px;top:326.80px;width:15.50px;height:8.94px;line-height:10.44px">05:32</div>
<div class="tc" style="left:46.20px;top:326.80px;width:18.80px;height:8.94px;line-height:10.44px">2.98</div>
<div class="tc" style="left:65.00px;top:326.80px;width:15.20px;height:8.94px;line-height:10.44px">11:41</div>
<div class="tc" style="left:80.20px;top:326.80px;width:19.10px;height:8.94px;line-height:10.44px">1.24</div>
<div class="tc" style="left:99.30px;top:326.80px;width:15.70px;height:8.94px;line-height:10.44px">17:49</div>
<div class="tc" style="left:115.00px;top:326.80px;width:18.70px;height:8.94px;line-height:10.44px">2.93</div>
<div class="tc" style="left:133.70px;top:326.80px;width:15.75px;height:8.94px;line-height:10.44px">23:59</div>
<div class="tc" style="left:149.45px;top:326.80px;width:18.40px;height:8.94px;line-height:10.44px">1.29</div>
<div class="foot" style="top:336.3px">Datum is LAT. Heights are in metres. Times are in UTC.</div>
</div></div>
<div class="abs" style="left:491.6px;top:54px;width:9.5px;height:351.9px;background:linear-gradient(90deg,rgba(0,0,0,.42),rgba(0,0,0,.3) 22%,rgba(0,0,0,.13) 55%,rgba(0,0,0,.03) 85%,rgba(0,0,0,0));-webkit-mask-image:linear-gradient(180deg,rgba(0,0,0,.15),#000 9px)"></div>
</body></html>
